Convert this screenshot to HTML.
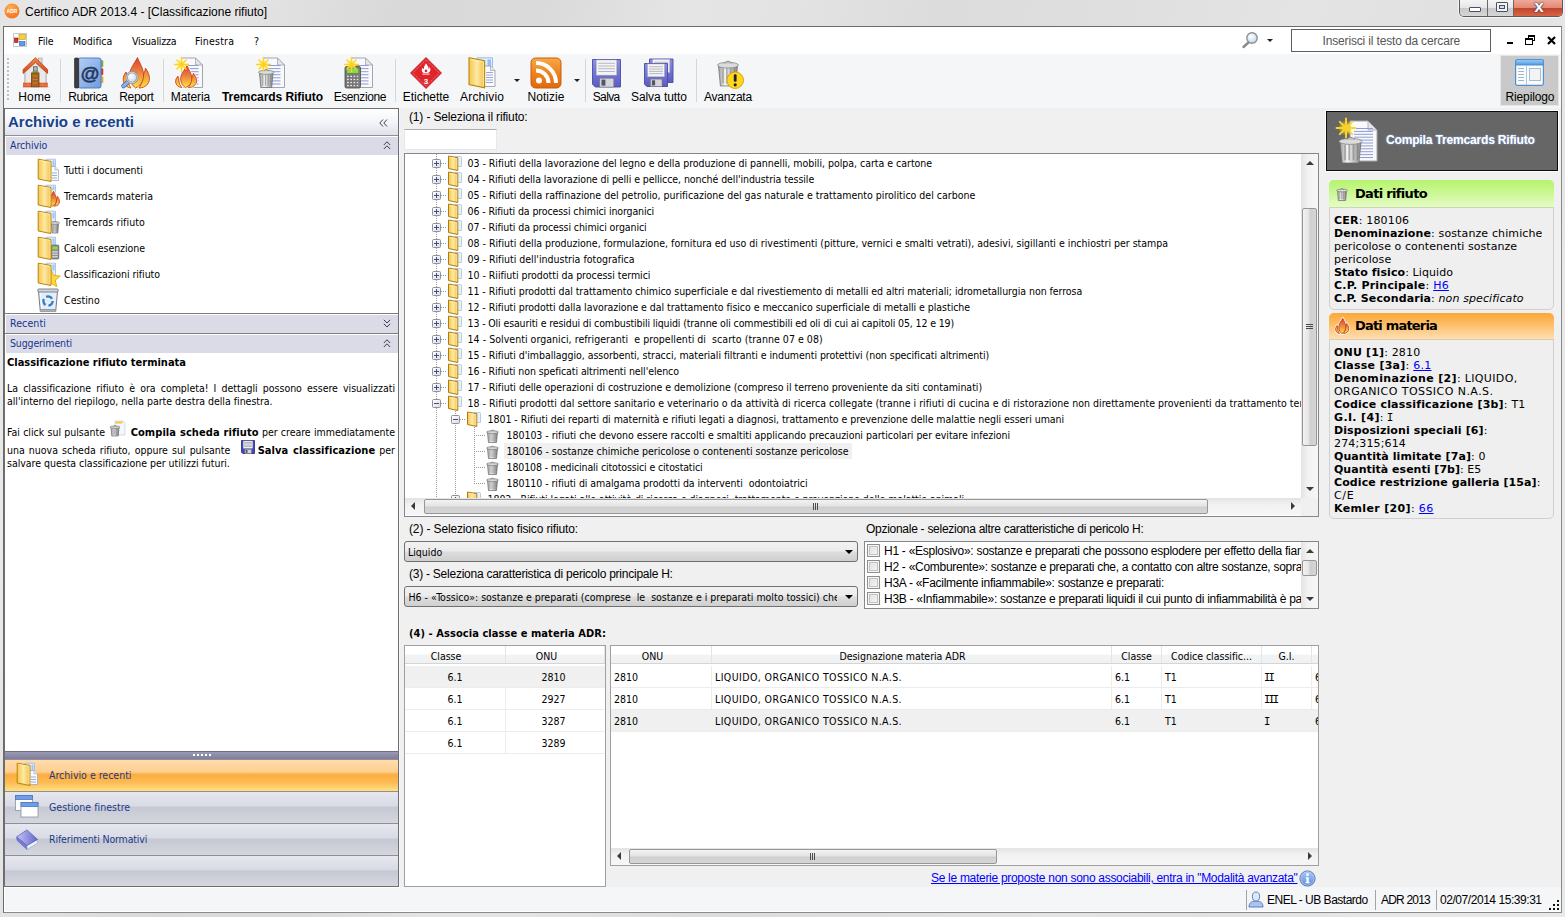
<!DOCTYPE html>
<html lang="it"><head><meta charset="utf-8"><title>Certifico ADR 2013.4 - [Classificazione rifiuto]</title>
<style>
*{box-sizing:border-box;margin:0;padding:0}
html,body{width:1565px;height:917px;overflow:hidden;background:#dcdcdc}
body{position:relative;font-family:"Liberation Sans",sans-serif;font-size:12px;color:#000;-webkit-font-smoothing:antialiased}
.a{position:absolute}
.t{position:absolute;white-space:pre;line-height:14px}
.th{font-family:"DejaVu Sans Condensed","Liberation Sans",sans-serif;font-size:10.5px;letter-spacing:-0.02px}
.vd{font-family:"DejaVu Sans","Liberation Sans",sans-serif}
svg{position:absolute;overflow:visible}
/* window frame */
#frame{left:0;top:0;width:1565px;height:917px;background:linear-gradient(105deg,#e4e4e4 0%,#e9e9e9 8%,#e2e2e2 15%,#d9d9d9 22%,#dadada 30%,#e5e5e5 38%,#e3e3e3 44%,#dcdcdc 52%,#dfdfdf 62%,#e4e4e4 72%,#e1e1e1 80%,#e7e7e7 90%,#e9e9e9 100%)}
#client{left:3px;top:26px;width:1559px;height:887px;border:1px solid #6b6b6b;border-right-color:#8a8a8a;border-bottom-color:#8a8a8a;background:#f5f6f7}
#menubar{left:4px;top:27px;width:1557px;height:27px;background:#fff}
#toolbar{left:4px;top:54px;width:1557px;height:54px;background:#f5f6f7}
.tl{position:absolute;top:90px;line-height:15px;font-size:12px;white-space:pre;text-align:center}
.sep{position:absolute;top:59px;width:1px;height:43px;background:#d5d6d8}
/* sidebar */
#side{left:4px;top:108px;width:395px;height:779px;border:1px solid #6f6f6f;background:#fff}
.band{position:absolute;left:6px;width:392px;height:18px;background:#dbdbe8}
.band span{position:absolute;left:4px;top:1px;line-height:14px;color:#15358c}
.si{position:absolute;left:64px;line-height:14px;white-space:pre}
.nb{position:absolute;left:5px;width:393px;height:32px;border-top:1px solid #8f8f98;background:linear-gradient(#e6e7ef 0%,#d9dbe4 45%,#c6c9d3 50%,#cdd0d9 75%,#d5d7df 100%)}
.nb span{position:absolute;left:44px;top:8px;line-height:14px;color:#1c3a8c;white-space:pre}
/* main */
.box{position:absolute;background:#fff;border:1px solid #abadb3}
.tr{position:absolute;left:0;height:16px;line-height:16px;white-space:pre}
.combo{position:absolute;height:21px;border:1px solid #707070;border-radius:3px;background:linear-gradient(#f2f2f2 0%,#ebebeb 48%,#dddddd 52%,#cfcfcf 100%)}
.combo span{position:absolute;left:3px;top:3px;line-height:14px;white-space:pre}
.gh{position:absolute;top:0;height:17px;line-height:20px;text-align:center;white-space:pre;border-right:1px solid #e3e4e6;background:linear-gradient(#fff 0%,#fff 45%,#f2f3f4 55%,#f0f1f2 100%)}
.gc{position:absolute;height:22px;line-height:22px;white-space:pre}
</style></head><body>
<div id="frame" class="a"></div>

<svg width="0" height="0" style="position:absolute"><defs>
<linearGradient id="gFl" gradientUnits="userSpaceOnUse" x1="0" y1="2" x2="0" y2="31"><stop offset="0" stop-color="#dc4630"/><stop offset=".45" stop-color="#ea8440"/><stop offset=".8" stop-color="#f6c040"/><stop offset="1" stop-color="#fde34a"/></linearGradient>
<linearGradient id="gFo" x1="0" y1="0" x2="1" y2="0"><stop offset="0" stop-color="#f6c64a"/><stop offset=".5" stop-color="#fde9a6"/><stop offset="1" stop-color="#f3bf3f"/></linearGradient>
<linearGradient id="gCan" x1="0" y1="0" x2="1" y2="0"><stop offset="0" stop-color="#9c9c9c"/><stop offset=".35" stop-color="#f4f4f4"/><stop offset=".7" stop-color="#bcbcbc"/><stop offset="1" stop-color="#8c8c8c"/></linearGradient>
<linearGradient id="gRoof" x1="0" y1="0" x2="0" y2="1"><stop offset="0" stop-color="#f08a48"/><stop offset="1" stop-color="#d8421a"/></linearGradient>
<linearGradient id="gBook" x1="0" y1="0" x2="1" y2="1"><stop offset="0" stop-color="#b5cff5"/><stop offset="1" stop-color="#6f9be0"/></linearGradient>
<linearGradient id="gRss" x1="0" y1="0" x2="0" y2="1"><stop offset="0" stop-color="#f8a848"/><stop offset=".5" stop-color="#ee821e"/><stop offset="1" stop-color="#de6a10"/></linearGradient>
<linearGradient id="gFlop" x1="0" y1="0" x2="0" y2="1"><stop offset="0" stop-color="#8d8fe0"/><stop offset="1" stop-color="#5a5cc0"/></linearGradient>
<linearGradient id="gWin" x1="0" y1="0" x2="0" y2="1"><stop offset="0" stop-color="#9fd0ff"/><stop offset="1" stop-color="#4f97e0"/></linearGradient>
<radialGradient id="gLens" cx=".4" cy=".35" r=".7"><stop offset="0" stop-color="#ffffff"/><stop offset="1" stop-color="#b9d9f0"/></radialGradient>
<radialGradient id="gGlow"><stop offset="0" stop-color="#fff27a" stop-opacity=".95"/><stop offset=".6" stop-color="#ffe95a" stop-opacity=".5"/><stop offset="1" stop-color="#ffe95a" stop-opacity="0"/></radialGradient>
<linearGradient id="gInfo" x1="0" y1="0" x2="0" y2="1"><stop offset="0" stop-color="#a9c6f2"/><stop offset="1" stop-color="#5f8fdc"/></linearGradient>
</defs></svg>
<svg style="left:4px;top:3px" width="16" height="16" viewBox="0 0 16 16"><defs><radialGradient id="gAdr" cx=".4" cy=".3" r=".8"><stop offset="0" stop-color="#ffb057"/><stop offset="1" stop-color="#f26a12"/></radialGradient></defs><circle cx="8" cy="8" r="7.500" fill="url(#gAdr)"/><text x="8" y="10" font-family="Liberation Sans,sans-serif" font-size="5" font-weight="bold" fill="#fff" text-anchor="middle">ADR</text></svg>
<div class="t" style="left:25px;top:5px">Certifico ADR 2013.4 - [Classificazione rifiuto]</div>
<div class="a" style="left:1459px;top:0;width:104px;height:17px;border:1px solid #5c5c5c;border-top:none;border-radius:0 0 5px 5px;overflow:hidden;box-shadow:0 0 0 1px rgba(255,255,255,.6)"><div class="a" style="left:0;top:0;width:28px;height:17px;background:linear-gradient(#f4f4f4 0%,#e6e6e6 45%,#c9c9c9 50%,#d8d8d8 100%);border-right:1px solid #6a6a6a"></div><div class="a" style="left:28px;top:0;width:26px;height:17px;background:linear-gradient(#f4f4f4 0%,#e6e6e6 45%,#c9c9c9 50%,#d8d8d8 100%);border-right:1px solid #6a6a6a"></div><div class="a" style="left:54px;top:0;width:50px;height:17px;background:linear-gradient(#f0a898 0%,#e08a78 45%,#c4452c 50%,#d86a48 100%)"></div><div class="a" style="left:9px;top:7px;width:12px;height:5px;border:1px solid #4a4f68;border-radius:1px;background:#fff"></div><div class="a" style="left:36px;top:2px;width:12px;height:10px;border:1px solid #4a4f68;border-radius:1px;background:#f4f4f4"></div><div class="a" style="left:39px;top:5px;width:6px;height:4px;border:1px solid #4a4f68;background:#ddd"></div><div class="a" style="left:71px;top:-2px;width:16px;height:18px;font:bold 17px/18px 'Liberation Sans',sans-serif;color:#fff;text-shadow:0 0 1px #3a3f58,0 0 1px #3a3f58,0 0 2px #3a3f58;text-align:center">x</div></div>
<div id="client" class="a"></div><div id="menubar" class="a"></div><div id="toolbar" class="a"></div>
<svg style="left:13px;top:33px" width="14" height="14" viewBox="0 0 14 14"><rect x=".5" y=".5" width="13" height="13" fill="#fff" stroke="#c9c9c9"/><rect x="6" y="1.500" width="6.500" height="5" fill="#f7cf3a" stroke="#c79a10" stroke-width=".6"/><rect x="1.500" y="5" width="3.500" height="4.500" fill="#d4352a" stroke="#8a1a12" stroke-width=".6"/><rect x="6.500" y="8.500" width="5.500" height="4" fill="#5f9be8" stroke="#2a5fb0" stroke-width=".6"/></svg>
<div class="t th" style="left:38px;top:34px;letter-spacing:-0.038px">File</div>
<div class="t th" style="left:73px;top:34px;letter-spacing:-0.037px">Modifica</div>
<div class="t th" style="left:132px;top:34px;letter-spacing:-0.232px">Visualizza</div>
<div class="t th" style="left:195px;top:34px;letter-spacing:0.224px">Finestra</div>
<div class="t th" style="left:254px;top:34px;letter-spacing:0px">?</div>
<svg style="left:1241px;top:31px" width="20" height="18" viewBox="0 0 20 18"><path d="M8 11L2.500 16" stroke="#8a8a8a" stroke-width="2.400" stroke-linecap="round"/><circle cx="11" cy="7" r="5.200" fill="url(#gLens)" stroke="#8f8f8f" stroke-width="1.400"/></svg>
<div class="a" style="left:1267px;top:39px;border:3px solid transparent;border-top:3px solid #222;width:0;height:0"></div>
<div class="a" style="left:1291px;top:29px;width:200px;height:23px;border:1px solid #5f5f5f;background:#fff"></div>
<div class="t" style="left:1322.500px;top:34px;color:#555;letter-spacing:-0.157px">Inserisci il testo da cercare</div>
<div class="a" style="left:1507px;top:42px;width:6px;height:2px;background:#000"></div>
<div class="a" style="left:1528px;top:35px;width:7px;height:6px;border:1px solid #000;border-top-width:2px"></div><div class="a" style="left:1525px;top:38px;width:8px;height:7px;border:1px solid #000;border-top-width:2px;background:#fff"></div>
<svg style="left:1547px;top:36px" width="9" height="9" viewBox="0 0 9 9"><path d="M1 1L8 8M8 1L1 8" stroke="#000" stroke-width="2.200"/></svg>
<div class="a" style="left:7px;top:58px;width:2px;height:44px;background:repeating-linear-gradient(#bfc1c6 0 2px,transparent 2px 4px)"></div>
<div class="a" style="left:1500px;top:55px;width:59px;height:51px;background:#c9c9c9;border:1px solid #e6e6e6"></div>
<svg style="left:18px;top:57px" width="32" height="32" viewBox="0 0 32 32"><g transform="translate(.8 0)"><rect x="19.700" y="1" width="3.600" height="8" fill="#dcdcdc" stroke="#9a9a9a" stroke-width=".6"/><path d="M5.900 15L16.600 5.500L27.500 15V27H5.900Z" fill="#d6d6d6" stroke="#a8a8a8" stroke-width=".7"/><path d="M7.200 15.500L16.600 7.200L26.200 15.500V26H7.200Z" fill="#e9e9e9"/><path d="M16.600 .7L4.300 12.500V16.500L16.600 5.200L28.800 16.500V12.500Z" fill="url(#gRoof)" stroke="#c23c14" stroke-width=".8" stroke-linejoin="round"/><rect x="14.600" y="9.800" width="3.800" height="4.300" fill="#8fc0f4" stroke="#8a4a1c" stroke-width=".8"/><rect x="13.600" y="14.200" width="6" height="1.700" fill="#58b030"/><rect x="4.500" y="26" width="24.200" height="4" fill="#e8622a" stroke="#c84a18" stroke-width=".5"/><path d="M4.500 28H28.700M9 26V28M14 28V30M24 26V28M19 28V30" stroke="#f6a070" stroke-width=".5"/><rect x="12.600" y="16" width="7.600" height="14" fill="#a8621f" stroke="#7a4210" stroke-width=".8"/><path d="M14 19H18.800M14 22.500H18.800M14 26H18.800" stroke="#c8843c" stroke-width=".9"/><path d="M3.500 30.500H30" stroke="#c8c8c8" stroke-width=".6"/></g></svg>
<div class="tl" style="left:-25.5px;width:120px;letter-spacing:0.146px;text-indent:0.146px">Home</div>
<svg style="left:72px;top:57px" width="32" height="32" viewBox="0 0 32 32"><rect x="28" y="3.500" width="3" height="6.500" rx="1" fill="#7dbb3c" stroke="#5a9a20" stroke-width=".5"/><rect x="28" y="11.500" width="3" height="6.500" rx="1" fill="#d93a3a" stroke="#a82020" stroke-width=".5"/><rect x="28" y="19.500" width="3" height="6.500" rx="1" fill="#f0b428" stroke="#c48a10" stroke-width=".5"/><rect x="6" y="1" width="23" height="30" rx="2" fill="url(#gBook)" stroke="#4a74bc" stroke-width=".9"/><rect x="2.500" y="1" width="4.200" height="30" rx="1" fill="#3c3c3c" stroke="#222" stroke-width=".6"/><text x="18" y="23" font-family="Liberation Sans,sans-serif" font-size="19" font-weight="bold" fill="#26385c" stroke="#26385c" stroke-width=".5" text-anchor="middle">@</text></svg>
<div class="tl" style="left:28px;width:120px;letter-spacing:-0.308px;text-indent:-0.308px">Rubrica</div>
<svg style="left:120px;top:57px" width="32" height="32" viewBox="0 0 32 32"><g transform="translate(0 0) scale(1 1)"><path d="M6 15C4 18 3 20 3.200 23C3.500 27.500 7 30.500 11 31C9 28 7.500 25 7.500 21.500C7.500 19 7 17 6 15Z" fill="none" stroke="#fff" stroke-width="2.34" stroke-linejoin="round"/><path d="M25.500 11C25 15 23 17 22.500 21C22 26 20.500 29 19 31C25 31 29.500 27 29.500 21.500C29.500 17 27 13.500 25.500 11Z" fill="none" stroke="#fff" stroke-width="2.34" stroke-linejoin="round"/><path d="M17.500 .5C14 7 9.500 12 9.500 19C9.500 25 13 29 15.500 31C20 29 23.500 25 23.500 18C23.500 11 19.500 6 17.500 .5Z" fill="none" stroke="#fff" stroke-width="2.34" stroke-linejoin="round"/><path d="M6 15C4 18 3 20 3.200 23C3.500 27.500 7 30.500 11 31C9 28 7.500 25 7.500 21.500C7.500 19 7 17 6 15Z" fill="url(#gFl)" stroke="#c8401a" stroke-width="0.90" stroke-linejoin="round"/><path d="M25.500 11C25 15 23 17 22.500 21C22 26 20.500 29 19 31C25 31 29.500 27 29.500 21.500C29.500 17 27 13.500 25.500 11Z" fill="url(#gFl)" stroke="#c8401a" stroke-width="0.90" stroke-linejoin="round"/><path d="M17.500 .5C14 7 9.500 12 9.500 19C9.500 25 13 29 15.500 31C20 29 23.500 25 23.500 18C23.500 11 19.500 6 17.500 .5Z" fill="url(#gFl)" stroke="#c8401a" stroke-width="0.90" stroke-linejoin="round"/></g><path d="M8 25L3.500 29" stroke="#4f74b8" stroke-width="4.600" stroke-linecap="round"/><path d="M8 25L3.500 29" stroke="#8fb0ec" stroke-width="3" stroke-linecap="round"/><circle cx="12" cy="20.500" r="5.300" fill="url(#gLens)" stroke="#8c8c94" stroke-width="2.200"/><circle cx="12" cy="20.500" r="5.300" fill="none" stroke="#e6e6ea" stroke-width=".8"/></svg>
<div class="tl" style="left:76.5px;width:120px;letter-spacing:-0.305px;text-indent:-0.305px">Report</div>
<svg style="left:174px;top:57px" width="32" height="32" viewBox="0 0 32 32"><path d="M7.5 1H21.5L28.5 8V30.5H7.5Z" fill="#f8f9fc" stroke="#a2a6ae" stroke-width="1"/><path d="M21.5 1V8H28.5Z" fill="#e4e6ec" stroke="#a2a6ae" stroke-width=".8"/><rect x="11.5" y="8.0" width="13" height="1" fill="#8f9ccf"/><rect x="11.5" y="11.1" width="13" height="1" fill="#8f9ccf"/><rect x="11.5" y="14.2" width="13" height="1" fill="#8f9ccf"/><rect x="11.5" y="17.2" width="13" height="1" fill="#8f9ccf"/><rect x="11.5" y="20.3" width="13" height="1" fill="#8f9ccf"/><rect x="11.5" y="23.4" width="13" height="1" fill="#8f9ccf"/><rect x="11.5" y="26.5" width="13" height="1" fill="#8f9ccf"/><g transform="translate(-1 8.3) scale(0.8 0.72)"><path d="M6 15C4 18 3 20 3.200 23C3.500 27.500 7 30.500 11 31C9 28 7.500 25 7.500 21.500C7.500 19 7 17 6 15Z" fill="none" stroke="#fff" stroke-width="2.93" stroke-linejoin="round"/><path d="M25.500 11C25 15 23 17 22.500 21C22 26 20.500 29 19 31C25 31 29.500 27 29.500 21.500C29.500 17 27 13.500 25.500 11Z" fill="none" stroke="#fff" stroke-width="2.93" stroke-linejoin="round"/><path d="M17.500 .5C14 7 9.500 12 9.500 19C9.500 25 13 29 15.500 31C20 29 23.500 25 23.500 18C23.500 11 19.500 6 17.500 .5Z" fill="none" stroke="#fff" stroke-width="2.93" stroke-linejoin="round"/><path d="M6 15C4 18 3 20 3.200 23C3.500 27.500 7 30.500 11 31C9 28 7.500 25 7.500 21.500C7.500 19 7 17 6 15Z" fill="url(#gFl)" stroke="#c8401a" stroke-width="1.12" stroke-linejoin="round"/><path d="M25.500 11C25 15 23 17 22.500 21C22 26 20.500 29 19 31C25 31 29.500 27 29.500 21.500C29.500 17 27 13.500 25.500 11Z" fill="url(#gFl)" stroke="#c8401a" stroke-width="1.12" stroke-linejoin="round"/><path d="M17.500 .5C14 7 9.500 12 9.500 19C9.500 25 13 29 15.500 31C20 29 23.500 25 23.500 18C23.500 11 19.500 6 17.500 .5Z" fill="url(#gFl)" stroke="#c8401a" stroke-width="1.12" stroke-linejoin="round"/></g><circle cx="7.5" cy="7.5" r="5.6" fill="url(#gGlow)"/><path d="M0.5 7.5L14.5 7.5" stroke="#ffd61e" stroke-width="1.40" stroke-linecap="round"/><path d="M2.9 2.9L12.1 12.1" stroke="#ffd61e" stroke-width="1.40" stroke-linecap="round"/><path d="M7.5 0.5L7.5 14.5" stroke="#ffd61e" stroke-width="1.40" stroke-linecap="round"/><path d="M12.1 2.9L2.9 12.1" stroke="#ffd61e" stroke-width="1.40" stroke-linecap="round"/><circle cx="7.5" cy="7.5" r="2.1" fill="#ffcf1a"/></svg>
<div class="tl" style="left:130.5px;width:120px;letter-spacing:-0.074px;text-indent:-0.074px">Materia</div>
<svg style="left:256px;top:57px" width="32" height="32" viewBox="0 0 32 32"><path d="M7.5 1H21.5L28.5 8V30.5H7.5Z" fill="#f8f9fc" stroke="#a2a6ae" stroke-width="1"/><path d="M21.5 1V8H28.5Z" fill="#e4e6ec" stroke="#a2a6ae" stroke-width=".8"/><rect x="11.5" y="8.0" width="13" height="1" fill="#8f9ccf"/><rect x="11.5" y="11.1" width="13" height="1" fill="#8f9ccf"/><rect x="11.5" y="14.2" width="13" height="1" fill="#8f9ccf"/><rect x="11.5" y="17.2" width="13" height="1" fill="#8f9ccf"/><rect x="11.5" y="20.3" width="13" height="1" fill="#8f9ccf"/><rect x="11.5" y="23.4" width="13" height="1" fill="#8f9ccf"/><rect x="11.5" y="26.5" width="13" height="1" fill="#8f9ccf"/><path d="M3.5 16.1H17.0L15.7 30.5H4.8Z" fill="url(#gCan)" stroke="#6a6a6a" stroke-width=".7"/><rect x="6.2" y="17.6" width="1.1" height="11.0" fill="#777" opacity=".55"/><rect x="8.9" y="17.6" width="1.1" height="11.0" fill="#777" opacity=".55"/><rect x="11.6" y="17.6" width="1.1" height="11.0" fill="#777" opacity=".55"/><rect x="14.3" y="17.6" width="1.1" height="11.0" fill="#777" opacity=".55"/><ellipse cx="10.25" cy="15.3" rx="7.75" ry="2.1" fill="#dcdcdc" stroke="#777" stroke-width=".7"/><path d="M7.5 14.2Q10.25 10.4 12.9 14.2" fill="#bdbdbd" stroke="#777" stroke-width=".7"/><circle cx="7.5" cy="7.5" r="5.6" fill="url(#gGlow)"/><path d="M0.5 7.5L14.5 7.5" stroke="#ffd61e" stroke-width="1.40" stroke-linecap="round"/><path d="M2.9 2.9L12.1 12.1" stroke="#ffd61e" stroke-width="1.40" stroke-linecap="round"/><path d="M7.5 0.5L7.5 14.5" stroke="#ffd61e" stroke-width="1.40" stroke-linecap="round"/><path d="M12.1 2.9L2.9 12.1" stroke="#ffd61e" stroke-width="1.40" stroke-linecap="round"/><circle cx="7.5" cy="7.5" r="2.1" fill="#ffcf1a"/></svg>
<div class="tl" style="left:212.5px;width:120px;font-weight:bold;letter-spacing:-0.061px;text-indent:-0.061px">Tremcards Rifiuto</div>
<svg style="left:344px;top:57px" width="32" height="32" viewBox="0 0 32 32"><path d="M7.5 1H21.5L28.5 8V30.5H7.5Z" fill="#f8f9fc" stroke="#a2a6ae" stroke-width="1"/><path d="M21.5 1V8H28.5Z" fill="#e4e6ec" stroke="#a2a6ae" stroke-width=".8"/><rect x="11.5" y="8.0" width="13" height="1" fill="#8f9ccf"/><rect x="11.5" y="11.1" width="13" height="1" fill="#8f9ccf"/><rect x="11.5" y="14.2" width="13" height="1" fill="#8f9ccf"/><rect x="11.5" y="17.2" width="13" height="1" fill="#8f9ccf"/><rect x="11.5" y="20.3" width="13" height="1" fill="#8f9ccf"/><rect x="11.5" y="23.4" width="13" height="1" fill="#8f9ccf"/><rect x="11.5" y="26.5" width="13" height="1" fill="#8f9ccf"/><rect x="1" y="9.500" width="15.500" height="21.500" rx="1.500" fill="#7c7c7c" stroke="#4a4a4a" stroke-width=".8"/><rect x="2.800" y="11.300" width="12" height="5" fill="#8fd652" stroke="#4f8a28" stroke-width=".6"/><rect x="2.80" y="18.20" width="2.300" height="2.100" fill="#e2e2e2" stroke="#505050" stroke-width=".4"/><rect x="5.95" y="18.20" width="2.300" height="2.100" fill="#e2e2e2" stroke="#505050" stroke-width=".4"/><rect x="9.10" y="18.20" width="2.300" height="2.100" fill="#e2e2e2" stroke="#505050" stroke-width=".4"/><rect x="12.25" y="18.20" width="2.300" height="2.100" fill="#e2e2e2" stroke="#505050" stroke-width=".4"/><rect x="2.80" y="21.30" width="2.300" height="2.100" fill="#e2e2e2" stroke="#505050" stroke-width=".4"/><rect x="5.95" y="21.30" width="2.300" height="2.100" fill="#e2e2e2" stroke="#505050" stroke-width=".4"/><rect x="9.10" y="21.30" width="2.300" height="2.100" fill="#e2e2e2" stroke="#505050" stroke-width=".4"/><rect x="12.25" y="21.30" width="2.300" height="2.100" fill="#e2e2e2" stroke="#505050" stroke-width=".4"/><rect x="2.80" y="24.40" width="2.300" height="2.100" fill="#e2e2e2" stroke="#505050" stroke-width=".4"/><rect x="5.95" y="24.40" width="2.300" height="2.100" fill="#e2e2e2" stroke="#505050" stroke-width=".4"/><rect x="9.10" y="24.40" width="2.300" height="2.100" fill="#e2e2e2" stroke="#505050" stroke-width=".4"/><rect x="12.25" y="24.40" width="2.300" height="2.100" fill="#e2e2e2" stroke="#505050" stroke-width=".4"/><rect x="2.80" y="27.50" width="2.300" height="2.100" fill="#e2e2e2" stroke="#505050" stroke-width=".4"/><rect x="5.95" y="27.50" width="2.300" height="2.100" fill="#e2e2e2" stroke="#505050" stroke-width=".4"/><rect x="9.10" y="27.50" width="2.300" height="2.100" fill="#e2e2e2" stroke="#505050" stroke-width=".4"/><rect x="12.25" y="27.50" width="2.300" height="2.100" fill="#e2e2e2" stroke="#505050" stroke-width=".4"/><circle cx="7.5" cy="7.5" r="5.6" fill="url(#gGlow)"/><path d="M0.5 7.5L14.5 7.5" stroke="#ffd61e" stroke-width="1.40" stroke-linecap="round"/><path d="M2.9 2.9L12.1 12.1" stroke="#ffd61e" stroke-width="1.40" stroke-linecap="round"/><path d="M7.5 0.5L7.5 14.5" stroke="#ffd61e" stroke-width="1.40" stroke-linecap="round"/><path d="M12.1 2.9L2.9 12.1" stroke="#ffd61e" stroke-width="1.40" stroke-linecap="round"/><circle cx="7.5" cy="7.5" r="2.1" fill="#ffcf1a"/></svg>
<div class="tl" style="left:300px;width:120px;letter-spacing:-0.427px;text-indent:-0.427px">Esenzione</div>
<svg style="left:410px;top:57px" width="32" height="32" viewBox="0 0 32 32"><path d="M16 .5L31.500 16L16 31.500L.5 16Z" fill="#e0242b" stroke="#b81820" stroke-width=".8"/><path d="M16 2.800L29.200 16L16 29.200L2.800 16Z" fill="none" stroke="#fff" stroke-width=".5" stroke-dasharray="1.200 1" opacity=".8"/><g transform="translate(16 11) scale(.72) translate(-16 -11.500)"><path d="M16 5C17.500 8 20 9.500 19.500 13C21 12 21 10.500 20.800 9.500C23 13 22.500 17.500 18.500 18.500H13.500C9.500 17.500 9.500 13.500 11.500 11C11.800 12.500 12.600 13 13.300 12.600C12.600 9.500 15 7.500 16 5Z" fill="#fff"/><circle cx="16" cy="15.500" r="1.800" fill="#e0242b"/><rect x="11" y="19.300" width="10" height="1.300" fill="#fff"/></g><text x="16" y="26.500" font-family="Liberation Sans,sans-serif" font-size="8" font-weight="bold" fill="#fff" text-anchor="middle">3</text></svg>
<div class="tl" style="left:366px;width:120px;letter-spacing:-0.023px;text-indent:-0.023px">Etichette</div>
<svg style="left:466px;top:57px" width="32" height="32" viewBox="0 0 32 32"><path d="M11 .8H26.500V26H11Z" fill="#dfecff" stroke="#9db7dc" stroke-width=".9"/><rect x="21.500" y="2.500" width="3.500" height="9" fill="#8fbff5"/><path d="M17 9H24.500L29 13.500V29.500H17Z" fill="#fafbfe" stroke="#9a9fab" stroke-width=".9"/><path d="M24.500 9V13.500H29" fill="#e4e7ee" stroke="#9a9fab" stroke-width=".7"/><path d="M20 15.500H27M20 18H27M20 20.500H27M20 23H27M20 25.500H27" stroke="#8f9ccf" stroke-width=".9"/><path d="M3 .8L18.600 3.800V30.800L3 27.500Z" fill="url(#gFo)" stroke="#b8860b" stroke-width="1.100"/><path d="M4.200 2.300L17.400 4.900V29.300" fill="none" stroke="#fff3c8" stroke-width=".8" opacity=".9"/></svg>
<div class="tl" style="left:422px;width:120px;letter-spacing:0.164px;text-indent:0.164px">Archivio</div>
<svg style="left:530px;top:57px" width="32" height="32" viewBox="0 0 32 32"><rect x="1" y="1" width="30" height="30" rx="4.500" fill="url(#gRss)" stroke="#c85c10" stroke-width="1"/><circle cx="9" cy="23.500" r="3" fill="#fff"/><path d="M6 13.500A12.500 12.500 0 0 1 18.500 26" fill="none" stroke="#fff" stroke-width="4"/><path d="M6 6A20 20 0 0 1 26 26" fill="none" stroke="#fff" stroke-width="4"/></svg>
<div class="tl" style="left:486px;width:120px;letter-spacing:0.045px;text-indent:0.045px">Notizie</div>
<svg style="left:590px;top:57px" width="32" height="32" viewBox="0 0 32 32"><path d="M2.5 2.5H30.5V30.0H5.3L2.5 27.2Z" fill="url(#gFlop)" stroke="#4a4aa8" stroke-width=".9"/><rect x="6.4" y="3.0" width="20.2" height="15.1" fill="#f4f4f6" stroke="#b8b8c8" stroke-width=".5"/><rect x="8.1" y="5.8" width="16.8" height=".9" fill="#b0b0b8"/><rect x="8.1" y="8.6" width="16.8" height=".9" fill="#b0b0b8"/><rect x="8.1" y="11.3" width="16.8" height=".9" fill="#b0b0b8"/><rect x="8.1" y="14.1" width="16.8" height=".9" fill="#b0b0b8"/><rect x="9.8" y="21.2" width="14.0" height="8.8" fill="#d5d5db" stroke="#777" stroke-width=".5"/><rect x="11.5" y="22.6" width="3.9" height="6.0" fill="#55555f"/></svg>
<div class="tl" style="left:546.5px;width:120px;letter-spacing:-0.606px;text-indent:-0.606px">Salva</div>
<svg style="left:643px;top:57px" width="32" height="32" viewBox="0 0 32 32"><path d="M6.5 2H30.0V25.5H8.8L6.5 23.2Z" fill="url(#gFlop)" stroke="#4a4aa8" stroke-width=".9"/><rect x="9.8" y="2.5" width="16.9" height="12.9" fill="#f4f4f6" stroke="#b8b8c8" stroke-width=".5"/><rect x="11.2" y="4.8" width="14.1" height=".9" fill="#b0b0b8"/><rect x="11.2" y="7.2" width="14.1" height=".9" fill="#b0b0b8"/><rect x="11.2" y="9.5" width="14.1" height=".9" fill="#b0b0b8"/><rect x="11.2" y="11.9" width="14.1" height=".9" fill="#b0b0b8"/><rect x="12.6" y="18.0" width="11.8" height="7.5" fill="#d5d5db" stroke="#777" stroke-width=".5"/><rect x="14.0" y="19.2" width="3.3" height="5.2" fill="#55555f"/><path d="M1.5 6.5H24.5V29.5H3.8L1.5 27.2Z" fill="url(#gFlop)" stroke="#4a4aa8" stroke-width=".9"/><rect x="4.7" y="7.0" width="16.6" height="12.7" fill="#f4f4f6" stroke="#b8b8c8" stroke-width=".5"/><rect x="6.1" y="9.3" width="13.8" height=".9" fill="#b0b0b8"/><rect x="6.1" y="11.6" width="13.8" height=".9" fill="#b0b0b8"/><rect x="6.1" y="13.9" width="13.8" height=".9" fill="#b0b0b8"/><rect x="6.1" y="16.2" width="13.8" height=".9" fill="#b0b0b8"/><rect x="7.5" y="22.1" width="11.5" height="7.4" fill="#d5d5db" stroke="#777" stroke-width=".5"/><rect x="8.9" y="23.3" width="3.2" height="5.1" fill="#55555f"/></svg>
<div class="tl" style="left:599px;width:120px;letter-spacing:-0.064px;text-indent:-0.064px">Salva tutto</div>
<svg style="left:712px;top:57px" width="32" height="32" viewBox="0 0 32 32"><path d="M6.5 9.2H25.5L23.6 29H8.4Z" fill="url(#gCan)" stroke="#6a6a6a" stroke-width=".7"/><rect x="10.3" y="11.3" width="1.5" height="15.1" fill="#777" opacity=".55"/><rect x="14.1" y="11.3" width="1.5" height="15.1" fill="#777" opacity=".55"/><rect x="17.9" y="11.3" width="1.5" height="15.1" fill="#777" opacity=".55"/><rect x="21.7" y="11.3" width="1.5" height="15.1" fill="#777" opacity=".55"/><ellipse cx="16.0" cy="8.2" rx="10.5" ry="2.9" fill="#dcdcdc" stroke="#777" stroke-width=".7"/><path d="M12.2 6.6Q16.0 1.4 19.8 6.6" fill="#bdbdbd" stroke="#777" stroke-width=".7"/><circle cx="23.200" cy="23.200" r="8.300" fill="#ffd51e" stroke="#caa000" stroke-width=".9"/><rect x="21.800" y="17.200" width="2.800" height="7.600" rx="1.200" fill="#222"/><circle cx="23.200" cy="27.800" r="1.600" fill="#222"/></svg>
<div class="tl" style="left:668px;width:120px;letter-spacing:-0.229px;text-indent:-0.229px">Avanzata</div>
<svg style="left:1515px;top:59px" width="29" height="27" viewBox="0 0 29 27"><rect x=".6" y=".6" width="27.800" height="25.800" rx="1.800" fill="#fbfbfb" stroke="#4f8fd6" stroke-width="1.200"/><path d="M.6 6V2.400A1.800 1.800 0 0 1 2.400 .6H26.600A1.800 1.800 0 0 1 28.400 2.400V6Z" fill="url(#gWin)" stroke="#4f8fd6" stroke-width="1"/><path d="M11.500 6.500V26" stroke="#9ccbf8" stroke-width="1"/><path d="M3.200 9.500H9M3.200 12.500H9M3.200 15.500H9M3.200 18.500H9M3.200 21.500H9" stroke="#9db4cc" stroke-width="1"/><rect x="14.500" y="9.500" width="11" height="12" fill="#f3f3f3" stroke="#a9bdd0" stroke-width="1"/></svg>
<div class="tl" style="left:1470px;width:120px;letter-spacing:-0.116px;text-indent:-0.116px">Riepilogo</div>
<div class="sep" style="left:60px"></div>
<div class="sep" style="left:163px"></div>
<div class="sep" style="left:395px"></div>
<div class="sep" style="left:585px"></div>
<div class="sep" style="left:696px"></div>
<div class="a" style="left:514px;top:79px;border:3px solid transparent;border-top:3px solid #222;width:0;height:0"></div>
<div class="a" style="left:574px;top:79px;border:3px solid transparent;border-top:3px solid #222;width:0;height:0"></div>
<div id="side" class="a"></div>
<div class="a" style="left:5px;top:109px;width:393px;height:27px;background:linear-gradient(#ffffff 0%,#f4f5f9 50%,#dfe2ec 100%);border-bottom:1px solid #8f8f98"></div>
<div class="a" style="left:8px;top:113px;font:bold 15px/18px 'Liberation Sans',sans-serif;color:#15428b;white-space:pre">Archivio e recenti</div>
<svg style="left:379px;top:119px" width="9" height="8" viewBox="0 0 9 8"><path d="M4 .5L.8 4L4 7.500M8 .5L4.800 4L8 7.500" fill="none" stroke="#3c3c46" stroke-width="1"/></svg>
<div class="band th" style="top:137px"><span style="letter-spacing:-0.078px">Archivio</span></div>
<svg style="left:383px;top:141px" width="8" height="9" viewBox="0 0 8 9"><path d="M.8 4L4 .8L7.200 4M.8 8L4 4.800L7.200 8" fill="none" stroke="#3c3c46" stroke-width="1"/></svg>
<div class="band th" style="top:315px"><span style="letter-spacing:0.109px">Recenti</span></div>
<svg style="left:383px;top:319px" width="8" height="9" viewBox="0 0 8 9"><path d="M.8 .8L4 4L7.200 .8M.8 4.800L4 8L7.200 4.800" fill="none" stroke="#3c3c46" stroke-width="1"/></svg>
<div class="band th" style="top:335px"><span style="letter-spacing:-0.137px">Suggerimenti</span></div>
<svg style="left:383px;top:339px" width="8" height="9" viewBox="0 0 8 9"><path d="M.8 4L4 .8L7.200 4M.8 8L4 4.800L7.200 8" fill="none" stroke="#3c3c46" stroke-width="1"/></svg>
<div class="a" style="left:5px;top:313px;width:393px;height:1px;background:#7d7d7d"></div>
<div class="a" style="left:5px;top:333px;width:393px;height:1px;background:#7d7d7d"></div>
<div class="si th" style="top:163px;letter-spacing:-0.012px">Tutti i documenti</div>
<svg style="left:37px;top:158px" width="24" height="24" viewBox="0 0 24 24"><g transform="translate(0 0) scale(1)"><path d="M9 1.200H18.500V20H9Z" fill="#e3efff" stroke="#9db7dc" stroke-width=".8"/><rect x="15.500" y="2.500" width="2" height="8" fill="#9cc6f5"/><path d="M13 8.500H18L21.500 12V22.500H13Z" fill="#fafbfe" stroke="#a3a9b6" stroke-width=".8"/><path d="M18 8.500V12H21.500" fill="#e4e7ee" stroke="#a3a9b6" stroke-width=".6"/><path d="M15 15H20M15 17.500H20M15 20H20" stroke="#8fa3d4" stroke-width=".9"/><path d="M1.200 1.200L14 3.400V23.500L1.200 21Z" fill="url(#gFo)" stroke="#b8860b" stroke-width="1"/><path d="M2.200 2.400L13 4.300V22.200" fill="none" stroke="#fff3c8" stroke-width=".7" opacity=".9"/></g></svg>
<div class="si th" style="top:189px;letter-spacing:0.041px">Tremcards materia</div>
<svg style="left:37px;top:184px" width="24" height="24" viewBox="0 0 24 24"><g><path d="M9 1.200H18.500V20H9Z" fill="#e3efff" stroke="#9db7dc" stroke-width=".8"/><rect x="15.500" y="2.500" width="2" height="6" fill="#9cc6f5"/><g transform="translate(8 7) scale(0.49 0.49)"><path d="M6 15C4 18 3 20 3.200 23C3.500 27.500 7 30.500 11 31C9 28 7.500 25 7.500 21.500C7.500 19 7 17 6 15Z" fill="none" stroke="#fff" stroke-width="4.78" stroke-linejoin="round"/><path d="M25.500 11C25 15 23 17 22.500 21C22 26 20.500 29 19 31C25 31 29.500 27 29.500 21.500C29.500 17 27 13.500 25.500 11Z" fill="none" stroke="#fff" stroke-width="4.78" stroke-linejoin="round"/><path d="M17.500 .5C14 7 9.500 12 9.500 19C9.500 25 13 29 15.500 31C20 29 23.500 25 23.500 18C23.500 11 19.500 6 17.500 .5Z" fill="none" stroke="#fff" stroke-width="4.78" stroke-linejoin="round"/><path d="M6 15C4 18 3 20 3.200 23C3.500 27.500 7 30.500 11 31C9 28 7.500 25 7.500 21.500C7.500 19 7 17 6 15Z" fill="url(#gFl)" stroke="#c8401a" stroke-width="1.84" stroke-linejoin="round"/><path d="M25.500 11C25 15 23 17 22.500 21C22 26 20.500 29 19 31C25 31 29.500 27 29.500 21.500C29.500 17 27 13.500 25.500 11Z" fill="url(#gFl)" stroke="#c8401a" stroke-width="1.84" stroke-linejoin="round"/><path d="M17.500 .5C14 7 9.500 12 9.500 19C9.500 25 13 29 15.500 31C20 29 23.500 25 23.500 18C23.500 11 19.500 6 17.500 .5Z" fill="url(#gFl)" stroke="#c8401a" stroke-width="1.84" stroke-linejoin="round"/></g><path d="M1.200 1.200L14 3.400V23.500L1.200 21Z" fill="url(#gFo)" stroke="#b8860b" stroke-width="1"/><path d="M2.200 2.400L13 4.300V22.200" fill="none" stroke="#fff3c8" stroke-width=".7" opacity=".9"/></g></svg>
<div class="si th" style="top:215px;letter-spacing:0.093px">Tremcards rifiuto</div>
<svg style="left:37px;top:210px" width="24" height="24" viewBox="0 0 24 24"><g><path d="M9 1.200H18.500V20H9Z" fill="#e3efff" stroke="#9db7dc" stroke-width=".8"/><rect x="15.500" y="2.500" width="2" height="6" fill="#9cc6f5"/><path d="M14.5 13.5H21.5L20.8 23.0H15.2Z" fill="url(#gCan)" stroke="#6a6a6a" stroke-width=".7"/><rect x="15.9" y="14.5" width="1.0" height="7.2" fill="#777" opacity=".55"/><rect x="17.3" y="14.5" width="1.0" height="7.2" fill="#777" opacity=".55"/><rect x="18.7" y="14.5" width="1.0" height="7.2" fill="#777" opacity=".55"/><rect x="20.1" y="14.5" width="1.0" height="7.2" fill="#777" opacity=".55"/><ellipse cx="18.0" cy="13.0" rx="4.5" ry="1.4" fill="#dcdcdc" stroke="#777" stroke-width=".7"/><path d="M16.6 12.2Q18.0 9.8 19.4 12.2" fill="#bdbdbd" stroke="#777" stroke-width=".7"/><path d="M1.200 1.200L14 3.400V23.500L1.200 21Z" fill="url(#gFo)" stroke="#b8860b" stroke-width="1"/><path d="M2.200 2.400L13 4.300V22.200" fill="none" stroke="#fff3c8" stroke-width=".7" opacity=".9"/></g></svg>
<div class="si th" style="top:241px;letter-spacing:-0.055px">Calcoli esenzione</div>
<svg style="left:37px;top:236px" width="24" height="24" viewBox="0 0 24 24"><g><path d="M9 1.200H18.500V20H9Z" fill="#e3efff" stroke="#9db7dc" stroke-width=".8"/><rect x="15.500" y="2.500" width="2" height="6" fill="#9cc6f5"/><rect x="14.300" y="9" width="7.500" height="14" rx="1" fill="#8a8a8a" stroke="#505050" stroke-width=".6"/><rect x="15.500" y="10.500" width="5.100" height="3" fill="#8fd652"/><rect x="15.5" y="15.0" width="1.300" height="1.600" fill="#ececec"/><rect x="17.4" y="15.0" width="1.300" height="1.600" fill="#ececec"/><rect x="19.3" y="15.0" width="1.300" height="1.600" fill="#ececec"/><rect x="15.5" y="17.5" width="1.300" height="1.600" fill="#ececec"/><rect x="17.4" y="17.5" width="1.300" height="1.600" fill="#ececec"/><rect x="19.3" y="17.5" width="1.300" height="1.600" fill="#ececec"/><rect x="15.5" y="20.0" width="1.300" height="1.600" fill="#ececec"/><rect x="17.4" y="20.0" width="1.300" height="1.600" fill="#ececec"/><rect x="19.3" y="20.0" width="1.300" height="1.600" fill="#ececec"/><path d="M1.200 1.200L14 3.400V23.500L1.200 21Z" fill="url(#gFo)" stroke="#b8860b" stroke-width="1"/><path d="M2.200 2.400L13 4.300V22.200" fill="none" stroke="#fff3c8" stroke-width=".7" opacity=".9"/></g></svg>
<div class="si th" style="top:267px;letter-spacing:-0.058px">Classificazioni rifiuto</div>
<svg style="left:37px;top:262px" width="24" height="24" viewBox="0 0 24 24"><g><path d="M9 1.200H18.500V20H9Z" fill="#e3efff" stroke="#9db7dc" stroke-width=".8"/><rect x="15.500" y="2.500" width="2" height="6" fill="#9cc6f5"/><polygon points="14,7.500 16.6,13.500 23.200,14 18.200,18.300 19.800,24.700 14,21.200 11,22 9.800,18.300 4.800,14 11.400,13.500" fill="#ffd83a" stroke="#d9a400" stroke-width=".8"/><path d="M1.200 1.200L14 3.400V23.500L1.200 21Z" fill="url(#gFo)" stroke="#b8860b" stroke-width="1"/><path d="M2.200 2.400L13 4.300V22.200" fill="none" stroke="#fff3c8" stroke-width=".7" opacity=".9"/></g></svg>
<div class="si th" style="top:293px;letter-spacing:0.038px">Cestino</div>
<svg style="left:37px;top:288px" width="22" height="24" viewBox="0 0 22 24"><path d="M1.500 3.500H20.500L18.800 22H3.200Z" fill="#e6edf5" stroke="#767c86" stroke-width="1"/><path d="M3.500 4.500L4.800 21" stroke="#fff" stroke-width="1" opacity=".8"/><rect x=".8" y="1" width="20.400" height="3" rx="1" fill="#cfd6de" stroke="#767c86" stroke-width=".9"/><rect x="3" y="21.800" width="16" height="1.800" rx=".8" fill="#b9c0c8" stroke="#767c86" stroke-width=".7"/><circle cx="11" cy="13" r="4.600" fill="none" stroke="#2f7fd0" stroke-width="2.400" stroke-dasharray="6.600 3"/></svg>
<div class="t th" style="left:7px;top:356px;font-weight:bold;font-size:11px;letter-spacing:-0.001px">Classificazione rifiuto terminata</div>
<div class="a th" style="left:7px;top:382px;width:388px;line-height:13px;text-align:justify;text-align-last:justify;white-space:normal">La classificazione rifiuto è ora completa! I dettagli possono essere visualizzati</div>
<div class="t th" style="left:7px;top:395px;line-height:13px">all'interno del riepilogo, nella parte destra della finestra.</div>
<div class="a th" style="left:7px;top:426px;width:388px;line-height:13px;text-align:justify;text-align-last:justify;white-space:normal">Fai click sul pulsante <span style="display:inline-block;width:19px"></span> <b style="font-size:11px;letter-spacing:0.07px">Compila scheda rifiuto</b> per creare immediatamente</div>
<div class="a th" style="left:7px;top:444px;width:388px;line-height:13px;text-align:justify;text-align-last:justify;white-space:normal">una nuova scheda rifiuto, oppure sul pulsante <span style="display:inline-block;width:19px"></span> <b style="font-size:11px;letter-spacing:0.074px">Salva classificazione</b> per</div>
<div class="t th" style="left:7px;top:457px;line-height:13px">salvare questa classificazione per utilizzi futuri.</div>
<svg style="left:110px;top:420px" width="16" height="16" viewBox="0 0 16 16"><path d="M5 1H13L15 3V15H5Z" fill="#f4f7fc" stroke="#b9c4d8" stroke-width=".6"/><rect x="5.500" y="1.500" width="7" height="2" fill="#f6c544"/><path d="M1 7.6H9L8.2 16H1.8Z" fill="url(#gCan)" stroke="#6a6a6a" stroke-width=".7"/><rect x="2.6" y="8.5" width="1.0" height="6.4" fill="#777" opacity=".55"/><rect x="4.2" y="8.5" width="1.0" height="6.4" fill="#777" opacity=".55"/><rect x="5.8" y="8.5" width="1.0" height="6.4" fill="#777" opacity=".55"/><rect x="7.4" y="8.5" width="1.0" height="6.4" fill="#777" opacity=".55"/><ellipse cx="5.0" cy="7.2" rx="5.0" ry="1.2" fill="#dcdcdc" stroke="#777" stroke-width=".7"/><path d="M3.4 6.5Q5.0 4.3 6.6 6.5" fill="#bdbdbd" stroke="#777" stroke-width=".7"/></svg>
<svg style="left:241px;top:440px" width="14" height="14" viewBox="0 0 14 14"><path d="M0.5 0.5H13.5V13.5H1.8L0.5 12.2Z" fill="#4848b8" stroke="#30308c" stroke-width=".9"/><rect x="2.3" y="1.0" width="9.4" height="7.2" fill="#f4f4f6" stroke="#b8b8c8" stroke-width=".5"/><rect x="3.1" y="2.1" width="7.8" height=".9" fill="#b0b0b8"/><rect x="3.1" y="3.4" width="7.8" height=".9" fill="#b0b0b8"/><rect x="3.1" y="4.7" width="7.8" height=".9" fill="#b0b0b8"/><rect x="3.1" y="6.0" width="7.8" height=".9" fill="#b0b0b8"/><rect x="3.9" y="9.3" width="6.5" height="4.2" fill="#d5d5db" stroke="#777" stroke-width=".5"/><rect x="4.7" y="10.0" width="1.8" height="2.9" fill="#55555f"/></svg>
<div class="a" style="left:5px;top:751px;width:393px;height:8px;background:linear-gradient(#9a9ab4,#7d7d9c);border-top:1px solid #6f6f80"></div>
<div class="a" style="left:193px;top:754px;width:19px;height:2px;background:repeating-linear-gradient(90deg,#fff 0 2px,transparent 2px 4px)"></div>
<div class="nb" style="top:759px;background:linear-gradient(#ffdcae 0%,#ffcf90 38%,#fcad40 47%,#fdba52 72%,#ffe184 100%)"><span class="th" style="letter-spacing:-0.001px">Archivio e recenti</span></div>
<div class="nb" style="top:791px"><span class="th" style="letter-spacing:0.023px">Gestione finestre</span></div>
<div class="nb" style="top:823px"><span class="th" style="letter-spacing:-0.14px">Riferimenti Normativi</span></div>
<div class="nb" style="top:855px;height:31px"></div>
<svg style="left:16px;top:762px" width="24" height="24" viewBox="0 0 24 24"><g transform="translate(0 0) scale(1)"><path d="M9 1.200H18.500V20H9Z" fill="#e3efff" stroke="#9db7dc" stroke-width=".8"/><rect x="15.500" y="2.500" width="2" height="8" fill="#9cc6f5"/><path d="M13 8.500H18L21.500 12V22.500H13Z" fill="#fafbfe" stroke="#a3a9b6" stroke-width=".8"/><path d="M18 8.500V12H21.500" fill="#e4e7ee" stroke="#a3a9b6" stroke-width=".6"/><path d="M15 15H20M15 17.500H20M15 20H20" stroke="#8fa3d4" stroke-width=".9"/><path d="M1.200 1.200L14 3.400V23.500L1.200 21Z" fill="url(#gFo)" stroke="#b8860b" stroke-width="1"/><path d="M2.200 2.400L13 4.300V22.200" fill="none" stroke="#fff3c8" stroke-width=".7" opacity=".9"/></g></svg>
<svg style="left:15px;top:795px" width="24" height="23" viewBox="0 0 24 23"><rect x=".5" y=".5" width="17" height="15" fill="#fff" stroke="#8a93a8" stroke-width=".8"/><rect x=".5" y=".5" width="17" height="4" fill="#6f9ee8" stroke="#4a74c8" stroke-width=".8"/><rect x="6" y="7.500" width="17" height="14.500" fill="#fff" stroke="#8a93a8" stroke-width=".8"/><rect x="6" y="7.500" width="17" height="4" fill="#6f9ee8" stroke="#4a74c8" stroke-width=".8"/></svg>
<svg style="left:16px;top:829px" width="24" height="22" viewBox="0 0 24 22"><defs><linearGradient id="gBk" x1="0" y1="0" x2="1" y2="0"><stop offset="0" stop-color="#c4c4f6"/><stop offset="1" stop-color="#6464cc"/></linearGradient></defs><path d="M.8 7.800Q.3 9.500 1.200 11.500L11 20.500V16.400Z" fill="#7a7ad8" stroke="#5c5cb8" stroke-width=".6"/><path d="M11 16.400L21.600 10.400V14.300L11 20.500Z" fill="#e4f1ff" stroke="#8fa6d0" stroke-width=".6"/><path d="M.8 7.800L10.400 1.200Q11 .9 11.600 1.400L21.600 10.400L11 16.400Z" fill="url(#gBk)" stroke="#5c5cb8" stroke-width=".7"/></svg>
<div class="a" style="left:400px;top:108px;width:1161px;height:780px;background:#f0f0f0"></div>
<div class="a" style="left:1322px;top:108px;width:239px;height:780px;background:#f0f0f0"></div>
<div class="t" style="left:409px;top:110px;letter-spacing:-0.156px;">(1) - Seleziona il rifiuto:</div>
<div class="box" style="left:404px;top:129px;width:93px;height:21px;border-color:#e3e9ef;border-top-color:#abadb3"></div>
<div class="box" style="left:404px;top:153px;width:915px;height:364px;border-color:#828790"></div>
<div class="a th" style="left:405px;top:154px;width:896px;height:344px;overflow:hidden">
<div class="a" style="left:31px;top:0;width:1px;height:344px;background:repeating-linear-gradient(#9a9a9a 0 1px,transparent 1px 2px)"></div>
<div class="a" style="left:50px;top:257px;width:1px;height:100px;background:repeating-linear-gradient(#9a9a9a 0 1px,transparent 1px 2px)"></div>
<div class="a" style="left:69px;top:273px;width:1px;height:56px;background:repeating-linear-gradient(#9a9a9a 0 1px,transparent 1px 2px)"></div>
<div class="a" style="left:36px;top:9px;width:6px;height:1px;background:repeating-linear-gradient(90deg,#9a9a9a 0 1px,transparent 1px 2px)"></div>
<div class="a" style="left:27px;top:5px;width:9px;height:9px;border:1px solid #919191;border-radius:1.500px;background:linear-gradient(135deg,#fff,#dcdcdc)"></div><div class="a" style="left:29px;top:9px;width:5px;height:1px;background:#3c4a9c"></div><div class="a" style="left:31px;top:7px;width:1px;height:5px;background:#3c4a9c"></div>
<svg style="left:42px;top:1px" width="16" height="16" viewBox="0 0 16 16"><path d="M8 1.500H13.500Q14.500 1.500 14.500 2.500V11.500H8Z" fill="#e6f1ff" stroke="#a9c0e0" stroke-width=".8"/><path d="M1.500 1L10.800 2.700V15.500L1.500 13.500Z" fill="url(#gFo)" stroke="#b07c10" stroke-width="1"/><path d="M2.500 2.200L9.800 3.600V14.200" fill="none" stroke="#fff6d8" stroke-width=".6" opacity=".9"/></svg>
<div class="tr" style="left:62.5px;top:1px;letter-spacing:-0.02px">03 - Rifiuti della lavorazione del legno e della produzione di pannelli, mobili, polpa, carta e cartone</div>
<div class="a" style="left:36px;top:25px;width:6px;height:1px;background:repeating-linear-gradient(90deg,#9a9a9a 0 1px,transparent 1px 2px)"></div>
<div class="a" style="left:27px;top:21px;width:9px;height:9px;border:1px solid #919191;border-radius:1.500px;background:linear-gradient(135deg,#fff,#dcdcdc)"></div><div class="a" style="left:29px;top:25px;width:5px;height:1px;background:#3c4a9c"></div><div class="a" style="left:31px;top:23px;width:1px;height:5px;background:#3c4a9c"></div>
<svg style="left:42px;top:17px" width="16" height="16" viewBox="0 0 16 16"><path d="M8 1.500H13.500Q14.500 1.500 14.500 2.500V11.500H8Z" fill="#e6f1ff" stroke="#a9c0e0" stroke-width=".8"/><path d="M1.500 1L10.800 2.700V15.500L1.500 13.500Z" fill="url(#gFo)" stroke="#b07c10" stroke-width="1"/><path d="M2.500 2.200L9.800 3.600V14.200" fill="none" stroke="#fff6d8" stroke-width=".6" opacity=".9"/></svg>
<div class="tr" style="left:62.5px;top:17px;letter-spacing:-0.075px">04 - Rifiuti della lavorazione di pelli e pellicce, nonché dell'industria tessile</div>
<div class="a" style="left:36px;top:41px;width:6px;height:1px;background:repeating-linear-gradient(90deg,#9a9a9a 0 1px,transparent 1px 2px)"></div>
<div class="a" style="left:27px;top:37px;width:9px;height:9px;border:1px solid #919191;border-radius:1.500px;background:linear-gradient(135deg,#fff,#dcdcdc)"></div><div class="a" style="left:29px;top:41px;width:5px;height:1px;background:#3c4a9c"></div><div class="a" style="left:31px;top:39px;width:1px;height:5px;background:#3c4a9c"></div>
<svg style="left:42px;top:33px" width="16" height="16" viewBox="0 0 16 16"><path d="M8 1.500H13.500Q14.500 1.500 14.500 2.500V11.500H8Z" fill="#e6f1ff" stroke="#a9c0e0" stroke-width=".8"/><path d="M1.500 1L10.800 2.700V15.500L1.500 13.500Z" fill="url(#gFo)" stroke="#b07c10" stroke-width="1"/><path d="M2.500 2.200L9.800 3.600V14.200" fill="none" stroke="#fff6d8" stroke-width=".6" opacity=".9"/></svg>
<div class="tr" style="left:62.5px;top:33px;letter-spacing:0.001px">05 - Rifiuti della raffinazione del petrolio, purificazione del gas naturale e trattamento pirolitico del carbone</div>
<div class="a" style="left:36px;top:57px;width:6px;height:1px;background:repeating-linear-gradient(90deg,#9a9a9a 0 1px,transparent 1px 2px)"></div>
<div class="a" style="left:27px;top:53px;width:9px;height:9px;border:1px solid #919191;border-radius:1.500px;background:linear-gradient(135deg,#fff,#dcdcdc)"></div><div class="a" style="left:29px;top:57px;width:5px;height:1px;background:#3c4a9c"></div><div class="a" style="left:31px;top:55px;width:1px;height:5px;background:#3c4a9c"></div>
<svg style="left:42px;top:49px" width="16" height="16" viewBox="0 0 16 16"><path d="M8 1.500H13.500Q14.500 1.500 14.500 2.500V11.500H8Z" fill="#e6f1ff" stroke="#a9c0e0" stroke-width=".8"/><path d="M1.500 1L10.800 2.700V15.500L1.500 13.500Z" fill="url(#gFo)" stroke="#b07c10" stroke-width="1"/><path d="M2.500 2.200L9.800 3.600V14.200" fill="none" stroke="#fff6d8" stroke-width=".6" opacity=".9"/></svg>
<div class="tr" style="left:62.5px;top:49px;letter-spacing:-0.11px">06 - Rifiuti da processi chimici inorganici</div>
<div class="a" style="left:36px;top:73px;width:6px;height:1px;background:repeating-linear-gradient(90deg,#9a9a9a 0 1px,transparent 1px 2px)"></div>
<div class="a" style="left:27px;top:69px;width:9px;height:9px;border:1px solid #919191;border-radius:1.500px;background:linear-gradient(135deg,#fff,#dcdcdc)"></div><div class="a" style="left:29px;top:73px;width:5px;height:1px;background:#3c4a9c"></div><div class="a" style="left:31px;top:71px;width:1px;height:5px;background:#3c4a9c"></div>
<svg style="left:42px;top:65px" width="16" height="16" viewBox="0 0 16 16"><path d="M8 1.500H13.500Q14.500 1.500 14.500 2.500V11.500H8Z" fill="#e6f1ff" stroke="#a9c0e0" stroke-width=".8"/><path d="M1.500 1L10.800 2.700V15.500L1.500 13.500Z" fill="url(#gFo)" stroke="#b07c10" stroke-width="1"/><path d="M2.500 2.200L9.800 3.600V14.200" fill="none" stroke="#fff6d8" stroke-width=".6" opacity=".9"/></svg>
<div class="tr" style="left:62.5px;top:65px;letter-spacing:-0.088px">07 - Rifiuti da processi chimici organici</div>
<div class="a" style="left:36px;top:89px;width:6px;height:1px;background:repeating-linear-gradient(90deg,#9a9a9a 0 1px,transparent 1px 2px)"></div>
<div class="a" style="left:27px;top:85px;width:9px;height:9px;border:1px solid #919191;border-radius:1.500px;background:linear-gradient(135deg,#fff,#dcdcdc)"></div><div class="a" style="left:29px;top:89px;width:5px;height:1px;background:#3c4a9c"></div><div class="a" style="left:31px;top:87px;width:1px;height:5px;background:#3c4a9c"></div>
<svg style="left:42px;top:81px" width="16" height="16" viewBox="0 0 16 16"><path d="M8 1.500H13.500Q14.500 1.500 14.500 2.500V11.500H8Z" fill="#e6f1ff" stroke="#a9c0e0" stroke-width=".8"/><path d="M1.500 1L10.800 2.700V15.500L1.500 13.500Z" fill="url(#gFo)" stroke="#b07c10" stroke-width="1"/><path d="M2.500 2.200L9.800 3.600V14.200" fill="none" stroke="#fff6d8" stroke-width=".6" opacity=".9"/></svg>
<div class="tr" style="left:62.5px;top:81px;letter-spacing:-0.006px">08 - Rifiuti della produzione, formulazione, fornitura ed uso di rivestimenti (pitture, vernici e smalti vetrati), adesivi, sigillanti e inchiostri per stampa</div>
<div class="a" style="left:36px;top:105px;width:6px;height:1px;background:repeating-linear-gradient(90deg,#9a9a9a 0 1px,transparent 1px 2px)"></div>
<div class="a" style="left:27px;top:101px;width:9px;height:9px;border:1px solid #919191;border-radius:1.500px;background:linear-gradient(135deg,#fff,#dcdcdc)"></div><div class="a" style="left:29px;top:105px;width:5px;height:1px;background:#3c4a9c"></div><div class="a" style="left:31px;top:103px;width:1px;height:5px;background:#3c4a9c"></div>
<svg style="left:42px;top:97px" width="16" height="16" viewBox="0 0 16 16"><path d="M8 1.500H13.500Q14.500 1.500 14.500 2.500V11.500H8Z" fill="#e6f1ff" stroke="#a9c0e0" stroke-width=".8"/><path d="M1.500 1L10.800 2.700V15.500L1.500 13.500Z" fill="url(#gFo)" stroke="#b07c10" stroke-width="1"/><path d="M2.500 2.200L9.800 3.600V14.200" fill="none" stroke="#fff6d8" stroke-width=".6" opacity=".9"/></svg>
<div class="tr" style="left:62.5px;top:97px;letter-spacing:-0.006px">09 - Rifiuti dell'industria fotografica</div>
<div class="a" style="left:36px;top:121px;width:6px;height:1px;background:repeating-linear-gradient(90deg,#9a9a9a 0 1px,transparent 1px 2px)"></div>
<div class="a" style="left:27px;top:117px;width:9px;height:9px;border:1px solid #919191;border-radius:1.500px;background:linear-gradient(135deg,#fff,#dcdcdc)"></div><div class="a" style="left:29px;top:121px;width:5px;height:1px;background:#3c4a9c"></div><div class="a" style="left:31px;top:119px;width:1px;height:5px;background:#3c4a9c"></div>
<svg style="left:42px;top:113px" width="16" height="16" viewBox="0 0 16 16"><path d="M8 1.500H13.500Q14.500 1.500 14.500 2.500V11.500H8Z" fill="#e6f1ff" stroke="#a9c0e0" stroke-width=".8"/><path d="M1.500 1L10.800 2.700V15.500L1.500 13.500Z" fill="url(#gFo)" stroke="#b07c10" stroke-width="1"/><path d="M2.500 2.200L9.800 3.600V14.200" fill="none" stroke="#fff6d8" stroke-width=".6" opacity=".9"/></svg>
<div class="tr" style="left:62.5px;top:113px;letter-spacing:-0.033px">10 - Riifiuti prodotti da processi termici</div>
<div class="a" style="left:36px;top:137px;width:6px;height:1px;background:repeating-linear-gradient(90deg,#9a9a9a 0 1px,transparent 1px 2px)"></div>
<div class="a" style="left:27px;top:133px;width:9px;height:9px;border:1px solid #919191;border-radius:1.500px;background:linear-gradient(135deg,#fff,#dcdcdc)"></div><div class="a" style="left:29px;top:137px;width:5px;height:1px;background:#3c4a9c"></div><div class="a" style="left:31px;top:135px;width:1px;height:5px;background:#3c4a9c"></div>
<svg style="left:42px;top:129px" width="16" height="16" viewBox="0 0 16 16"><path d="M8 1.500H13.500Q14.500 1.500 14.500 2.500V11.500H8Z" fill="#e6f1ff" stroke="#a9c0e0" stroke-width=".8"/><path d="M1.500 1L10.800 2.700V15.500L1.500 13.500Z" fill="url(#gFo)" stroke="#b07c10" stroke-width="1"/><path d="M2.500 2.200L9.800 3.600V14.200" fill="none" stroke="#fff6d8" stroke-width=".6" opacity=".9"/></svg>
<div class="tr" style="left:62.5px;top:129px;letter-spacing:-0.052px">11 - Rifiuti prodotti dal trattamento chimico superficiale e dal rivestiemento di metalli ed altri materiali; idrometallurgia non ferrosa</div>
<div class="a" style="left:36px;top:153px;width:6px;height:1px;background:repeating-linear-gradient(90deg,#9a9a9a 0 1px,transparent 1px 2px)"></div>
<div class="a" style="left:27px;top:149px;width:9px;height:9px;border:1px solid #919191;border-radius:1.500px;background:linear-gradient(135deg,#fff,#dcdcdc)"></div><div class="a" style="left:29px;top:153px;width:5px;height:1px;background:#3c4a9c"></div><div class="a" style="left:31px;top:151px;width:1px;height:5px;background:#3c4a9c"></div>
<svg style="left:42px;top:145px" width="16" height="16" viewBox="0 0 16 16"><path d="M8 1.500H13.500Q14.500 1.500 14.500 2.500V11.500H8Z" fill="#e6f1ff" stroke="#a9c0e0" stroke-width=".8"/><path d="M1.500 1L10.800 2.700V15.500L1.500 13.500Z" fill="url(#gFo)" stroke="#b07c10" stroke-width="1"/><path d="M2.500 2.200L9.800 3.600V14.200" fill="none" stroke="#fff6d8" stroke-width=".6" opacity=".9"/></svg>
<div class="tr" style="left:62.5px;top:145px;letter-spacing:-0.048px">12 - Rifiuti prodotti dalla lavorazione e dal trattamento fisico e meccanico superficiale di metalli e plastiche</div>
<div class="a" style="left:36px;top:169px;width:6px;height:1px;background:repeating-linear-gradient(90deg,#9a9a9a 0 1px,transparent 1px 2px)"></div>
<div class="a" style="left:27px;top:165px;width:9px;height:9px;border:1px solid #919191;border-radius:1.500px;background:linear-gradient(135deg,#fff,#dcdcdc)"></div><div class="a" style="left:29px;top:169px;width:5px;height:1px;background:#3c4a9c"></div><div class="a" style="left:31px;top:167px;width:1px;height:5px;background:#3c4a9c"></div>
<svg style="left:42px;top:161px" width="16" height="16" viewBox="0 0 16 16"><path d="M8 1.500H13.500Q14.500 1.500 14.500 2.500V11.500H8Z" fill="#e6f1ff" stroke="#a9c0e0" stroke-width=".8"/><path d="M1.500 1L10.800 2.700V15.500L1.500 13.500Z" fill="url(#gFo)" stroke="#b07c10" stroke-width="1"/><path d="M2.500 2.200L9.800 3.600V14.200" fill="none" stroke="#fff6d8" stroke-width=".6" opacity=".9"/></svg>
<div class="tr" style="left:62.5px;top:161px;letter-spacing:-0.126px">13 - Oli esauriti e residui di combustibili liquidi (tranne oli commestibili ed oli di cui ai capitoli 05, 12 e 19)</div>
<div class="a" style="left:36px;top:185px;width:6px;height:1px;background:repeating-linear-gradient(90deg,#9a9a9a 0 1px,transparent 1px 2px)"></div>
<div class="a" style="left:27px;top:181px;width:9px;height:9px;border:1px solid #919191;border-radius:1.500px;background:linear-gradient(135deg,#fff,#dcdcdc)"></div><div class="a" style="left:29px;top:185px;width:5px;height:1px;background:#3c4a9c"></div><div class="a" style="left:31px;top:183px;width:1px;height:5px;background:#3c4a9c"></div>
<svg style="left:42px;top:177px" width="16" height="16" viewBox="0 0 16 16"><path d="M8 1.500H13.500Q14.500 1.500 14.500 2.500V11.500H8Z" fill="#e6f1ff" stroke="#a9c0e0" stroke-width=".8"/><path d="M1.500 1L10.800 2.700V15.500L1.500 13.500Z" fill="url(#gFo)" stroke="#b07c10" stroke-width="1"/><path d="M2.500 2.200L9.800 3.600V14.200" fill="none" stroke="#fff6d8" stroke-width=".6" opacity=".9"/></svg>
<div class="tr" style="left:62.5px;top:177px;letter-spacing:0.04px">14 - Solventi organici, refrigeranti  e propellenti di  scarto (tranne 07 e 08)</div>
<div class="a" style="left:36px;top:201px;width:6px;height:1px;background:repeating-linear-gradient(90deg,#9a9a9a 0 1px,transparent 1px 2px)"></div>
<div class="a" style="left:27px;top:197px;width:9px;height:9px;border:1px solid #919191;border-radius:1.500px;background:linear-gradient(135deg,#fff,#dcdcdc)"></div><div class="a" style="left:29px;top:201px;width:5px;height:1px;background:#3c4a9c"></div><div class="a" style="left:31px;top:199px;width:1px;height:5px;background:#3c4a9c"></div>
<svg style="left:42px;top:193px" width="16" height="16" viewBox="0 0 16 16"><path d="M8 1.500H13.500Q14.500 1.500 14.500 2.500V11.500H8Z" fill="#e6f1ff" stroke="#a9c0e0" stroke-width=".8"/><path d="M1.500 1L10.800 2.700V15.500L1.500 13.500Z" fill="url(#gFo)" stroke="#b07c10" stroke-width="1"/><path d="M2.500 2.200L9.800 3.600V14.200" fill="none" stroke="#fff6d8" stroke-width=".6" opacity=".9"/></svg>
<div class="tr" style="left:62.5px;top:193px;letter-spacing:-0.048px">15 - Rifiuti d'imballaggio, assorbenti, stracci, materiali filtranti e indumenti protettivi (non specificati altrimenti)</div>
<div class="a" style="left:36px;top:217px;width:6px;height:1px;background:repeating-linear-gradient(90deg,#9a9a9a 0 1px,transparent 1px 2px)"></div>
<div class="a" style="left:27px;top:213px;width:9px;height:9px;border:1px solid #919191;border-radius:1.500px;background:linear-gradient(135deg,#fff,#dcdcdc)"></div><div class="a" style="left:29px;top:217px;width:5px;height:1px;background:#3c4a9c"></div><div class="a" style="left:31px;top:215px;width:1px;height:5px;background:#3c4a9c"></div>
<svg style="left:42px;top:209px" width="16" height="16" viewBox="0 0 16 16"><path d="M8 1.500H13.500Q14.500 1.500 14.500 2.500V11.500H8Z" fill="#e6f1ff" stroke="#a9c0e0" stroke-width=".8"/><path d="M1.500 1L10.800 2.700V15.500L1.500 13.500Z" fill="url(#gFo)" stroke="#b07c10" stroke-width="1"/><path d="M2.500 2.200L9.800 3.600V14.200" fill="none" stroke="#fff6d8" stroke-width=".6" opacity=".9"/></svg>
<div class="tr" style="left:62.5px;top:209px;letter-spacing:-0.083px">16 - Rifiuti non speficati altrimenti nell'elenco</div>
<div class="a" style="left:36px;top:233px;width:6px;height:1px;background:repeating-linear-gradient(90deg,#9a9a9a 0 1px,transparent 1px 2px)"></div>
<div class="a" style="left:27px;top:229px;width:9px;height:9px;border:1px solid #919191;border-radius:1.500px;background:linear-gradient(135deg,#fff,#dcdcdc)"></div><div class="a" style="left:29px;top:233px;width:5px;height:1px;background:#3c4a9c"></div><div class="a" style="left:31px;top:231px;width:1px;height:5px;background:#3c4a9c"></div>
<svg style="left:42px;top:225px" width="16" height="16" viewBox="0 0 16 16"><path d="M8 1.500H13.500Q14.500 1.500 14.500 2.500V11.500H8Z" fill="#e6f1ff" stroke="#a9c0e0" stroke-width=".8"/><path d="M1.500 1L10.800 2.700V15.500L1.500 13.500Z" fill="url(#gFo)" stroke="#b07c10" stroke-width="1"/><path d="M2.500 2.200L9.800 3.600V14.200" fill="none" stroke="#fff6d8" stroke-width=".6" opacity=".9"/></svg>
<div class="tr" style="left:62.5px;top:225px;letter-spacing:-0.035px">17 - Rifiuti delle operazioni di costruzione e demolizione (compreso il terreno proveniente da siti contaminati)</div>
<div class="a" style="left:36px;top:249px;width:6px;height:1px;background:repeating-linear-gradient(90deg,#9a9a9a 0 1px,transparent 1px 2px)"></div>
<div class="a" style="left:27px;top:245px;width:9px;height:9px;border:1px solid #919191;border-radius:1.500px;background:linear-gradient(135deg,#fff,#dcdcdc)"></div><div class="a" style="left:29px;top:249px;width:5px;height:1px;background:#3c4a9c"></div>
<svg style="left:42px;top:241px" width="16" height="16" viewBox="0 0 16 16"><path d="M8 1.500H13.500Q14.500 1.500 14.500 2.500V11.500H8Z" fill="#e6f1ff" stroke="#a9c0e0" stroke-width=".8"/><path d="M1.500 1L10.800 2.700V15.500L1.500 13.500Z" fill="url(#gFo)" stroke="#b07c10" stroke-width="1"/><path d="M2.500 2.200L9.800 3.600V14.200" fill="none" stroke="#fff6d8" stroke-width=".6" opacity=".9"/></svg>
<div class="tr" style="left:62.5px;top:241px;letter-spacing:0.017px">18 - Rifiuti prodotti dal settore sanitario e veterinario o da attività di ricerca collegate (tranne i rifiuti di cucina e di ristorazione non direttamente provenienti da trattamento terapeutico)</div>
<div class="a" style="left:55px;top:265px;width:6px;height:1px;background:repeating-linear-gradient(90deg,#9a9a9a 0 1px,transparent 1px 2px)"></div>
<div class="a" style="left:46px;top:261px;width:9px;height:9px;border:1px solid #919191;border-radius:1.500px;background:linear-gradient(135deg,#fff,#dcdcdc)"></div><div class="a" style="left:48px;top:265px;width:5px;height:1px;background:#3c4a9c"></div>
<svg style="left:61px;top:257px" width="16" height="16" viewBox="0 0 16 16"><path d="M8 1.500H13.500Q14.500 1.500 14.500 2.500V11.500H8Z" fill="#e6f1ff" stroke="#a9c0e0" stroke-width=".8"/><path d="M1.500 1L10.800 2.700V15.500L1.500 13.500Z" fill="url(#gFo)" stroke="#b07c10" stroke-width="1"/><path d="M2.500 2.200L9.800 3.600V14.200" fill="none" stroke="#fff6d8" stroke-width=".6" opacity=".9"/></svg>
<div class="tr" style="left:82.5px;top:257px;letter-spacing:-0.042px">1801 - Rifiuti dei reparti di maternità e rifiuti legati a diagnosi, trattamento e prevenzione delle malattie negli esseri umani</div>
<div class="a" style="left:69px;top:281px;width:11px;height:1px;background:repeating-linear-gradient(90deg,#9a9a9a 0 1px,transparent 1px 2px)"></div>
<svg style="left:81px;top:274px" width="13" height="15" viewBox="0 0 13 15"><path d="M1.5 4.6H11.5L10.5 14.5H2.5Z" fill="url(#gCan)" stroke="#6a6a6a" stroke-width=".7"/><rect x="3.5" y="5.7" width="1.0" height="7.5" fill="#777" opacity=".55"/><rect x="5.5" y="5.7" width="1.0" height="7.5" fill="#777" opacity=".55"/><rect x="7.5" y="5.7" width="1.0" height="7.5" fill="#777" opacity=".55"/><rect x="9.5" y="5.7" width="1.0" height="7.5" fill="#777" opacity=".55"/><ellipse cx="6.5" cy="4.1" rx="6.0" ry="1.4" fill="#dcdcdc" stroke="#777" stroke-width=".7"/><path d="M4.5 3.3Q6.5 0.7 8.5 3.3" fill="#bdbdbd" stroke="#777" stroke-width=".7"/></svg>
<div class="tr" style="left:101.5px;top:273px;letter-spacing:-0.034px">180103 - rifiuti che devono essere raccolti e smaltiti applicando precauzioni particolari per evitare infezioni</div>
<div class="a" style="left:69px;top:297px;width:11px;height:1px;background:repeating-linear-gradient(90deg,#9a9a9a 0 1px,transparent 1px 2px)"></div>
<svg style="left:81px;top:290px" width="13" height="15" viewBox="0 0 13 15"><path d="M1.5 4.6H11.5L10.5 14.5H2.5Z" fill="url(#gCan)" stroke="#6a6a6a" stroke-width=".7"/><rect x="3.5" y="5.7" width="1.0" height="7.5" fill="#777" opacity=".55"/><rect x="5.5" y="5.7" width="1.0" height="7.5" fill="#777" opacity=".55"/><rect x="7.5" y="5.7" width="1.0" height="7.5" fill="#777" opacity=".55"/><rect x="9.5" y="5.7" width="1.0" height="7.5" fill="#777" opacity=".55"/><ellipse cx="6.5" cy="4.1" rx="6.0" ry="1.4" fill="#dcdcdc" stroke="#777" stroke-width=".7"/><path d="M4.5 3.3Q6.5 0.7 8.5 3.3" fill="#bdbdbd" stroke="#777" stroke-width=".7"/></svg>
<div class="a" style="left:99px;top:289px;width:348px;height:16px;background:#f0f0f0"></div>
<div class="tr" style="left:101.5px;top:289px;letter-spacing:-0.014px">180106 - sostanze chimiche pericolose o contenenti sostanze pericolose</div>
<div class="a" style="left:69px;top:313px;width:11px;height:1px;background:repeating-linear-gradient(90deg,#9a9a9a 0 1px,transparent 1px 2px)"></div>
<svg style="left:81px;top:306px" width="13" height="15" viewBox="0 0 13 15"><path d="M1.5 4.6H11.5L10.5 14.5H2.5Z" fill="url(#gCan)" stroke="#6a6a6a" stroke-width=".7"/><rect x="3.5" y="5.7" width="1.0" height="7.5" fill="#777" opacity=".55"/><rect x="5.5" y="5.7" width="1.0" height="7.5" fill="#777" opacity=".55"/><rect x="7.5" y="5.7" width="1.0" height="7.5" fill="#777" opacity=".55"/><rect x="9.5" y="5.7" width="1.0" height="7.5" fill="#777" opacity=".55"/><ellipse cx="6.5" cy="4.1" rx="6.0" ry="1.4" fill="#dcdcdc" stroke="#777" stroke-width=".7"/><path d="M4.5 3.3Q6.5 0.7 8.5 3.3" fill="#bdbdbd" stroke="#777" stroke-width=".7"/></svg>
<div class="tr" style="left:101.5px;top:305px;letter-spacing:-0.126px">180108 - medicinali citotossici e citostatici</div>
<div class="a" style="left:69px;top:329px;width:11px;height:1px;background:repeating-linear-gradient(90deg,#9a9a9a 0 1px,transparent 1px 2px)"></div>
<svg style="left:81px;top:322px" width="13" height="15" viewBox="0 0 13 15"><path d="M1.5 4.6H11.5L10.5 14.5H2.5Z" fill="url(#gCan)" stroke="#6a6a6a" stroke-width=".7"/><rect x="3.5" y="5.7" width="1.0" height="7.5" fill="#777" opacity=".55"/><rect x="5.5" y="5.7" width="1.0" height="7.5" fill="#777" opacity=".55"/><rect x="7.5" y="5.7" width="1.0" height="7.5" fill="#777" opacity=".55"/><rect x="9.5" y="5.7" width="1.0" height="7.5" fill="#777" opacity=".55"/><ellipse cx="6.5" cy="4.1" rx="6.0" ry="1.4" fill="#dcdcdc" stroke="#777" stroke-width=".7"/><path d="M4.5 3.3Q6.5 0.7 8.5 3.3" fill="#bdbdbd" stroke="#777" stroke-width=".7"/></svg>
<div class="tr" style="left:101.5px;top:321px;letter-spacing:-0.049px">180110 - rifiuti di amalgama prodotti da interventi  odontoiatrici</div>
<div class="a" style="left:55px;top:345px;width:6px;height:1px;background:repeating-linear-gradient(90deg,#9a9a9a 0 1px,transparent 1px 2px)"></div>
<div class="a" style="left:46px;top:341px;width:9px;height:9px;border:1px solid #919191;border-radius:1.500px;background:linear-gradient(135deg,#fff,#dcdcdc)"></div><div class="a" style="left:48px;top:345px;width:5px;height:1px;background:#3c4a9c"></div><div class="a" style="left:50px;top:343px;width:1px;height:5px;background:#3c4a9c"></div>
<svg style="left:61px;top:337px" width="16" height="16" viewBox="0 0 16 16"><path d="M8 1.500H13.500Q14.500 1.500 14.500 2.500V11.500H8Z" fill="#e6f1ff" stroke="#a9c0e0" stroke-width=".8"/><path d="M1.500 1L10.800 2.700V15.500L1.500 13.500Z" fill="url(#gFo)" stroke="#b07c10" stroke-width="1"/><path d="M2.500 2.200L9.800 3.600V14.200" fill="none" stroke="#fff6d8" stroke-width=".6" opacity=".9"/></svg>
<div class="tr" style="left:82.5px;top:337px;letter-spacing:-0.067px">1802 - Rifiuti legati alle attività di ricerca e diagnosi, trattamento e prevenzione delle malattie animali</div>
</div>
<div class="a" style="left:1301px;top:154px;width:17px;height:344px;background:linear-gradient(90deg,#e3e3e3,#f2f2f2 40%,#f6f6f6)"></div><div class="a" style="left:1306px;top:161px;border:4px solid transparent;border-top:none;border-bottom:4px solid #3a3a3a;width:0;height:0"></div><div class="a" style="left:1306px;top:487px;border:4px solid transparent;border-bottom:none;border-top:4px solid #3a3a3a;width:0;height:0"></div><div class="a" style="left:1302px;top:208px;width:15px;height:238px;border:1px solid #979797;border-radius:2px;background:linear-gradient(90deg,#f3f3f3 0%,#e4e4e4 45%,#cfcfcf 55%,#d6d6d6 100%)"></div><div class="a" style="left:1306px;top:324px;width:7px;height:6px;background:repeating-linear-gradient(#4a4a4a 0 1px,transparent 1px 2px)"></div>
<div class="a" style="left:405px;top:498px;width:896px;height:17px;background:linear-gradient(#e3e3e3,#f2f2f2 40%,#f6f6f6)"></div><div class="a" style="left:411px;top:502px;border:4px solid transparent;border-left:none;border-right:4px solid #3a3a3a;width:0;height:0"></div><div class="a" style="left:1291px;top:502px;border:4px solid transparent;border-right:none;border-left:4px solid #3a3a3a;width:0;height:0"></div><div class="a" style="left:424px;top:499px;width:784px;height:15px;border:1px solid #979797;border-radius:2px;background:linear-gradient(#f3f3f3 0%,#e4e4e4 45%,#cfcfcf 55%,#d6d6d6 100%)"></div><div class="a" style="left:813px;top:503px;width:6px;height:7px;background:repeating-linear-gradient(90deg,#4a4a4a 0 1px,transparent 1px 2px)"></div>
<div class="a" style="left:1301px;top:498px;width:17px;height:18px;background:#f0f0f0"></div>
<div class="t" style="left:409px;top:522px;letter-spacing:-0.137px;">(2) - Seleziona stato fisico rifiuto:</div>
<div class="combo th" style="left:404px;top:541px;width:454px"><span>Liquido</span></div>
<div class="a" style="left:845px;top:550px;border:4px solid transparent;border-bottom:none;border-top:4px solid #000;width:0;height:0"></div>
<div class="t" style="left:409px;top:567px;letter-spacing:-0.246px;">(3) - Seleziona caratteristica di pericolo principale H:</div>
<div class="combo th" style="left:404px;top:586px;width:454px"><span style="left:3.500px;width:428.500px;overflow:hidden;letter-spacing:-0.013px">H6 - «Tossico»: sostanze e preparati (comprese  le  sostanze e i preparati molto tossici) che,</span></div>
<div class="a" style="left:845px;top:595px;border:4px solid transparent;border-bottom:none;border-top:4px solid #000;width:0;height:0"></div>
<div class="t" style="left:866px;top:522px;letter-spacing:-0.276px;">Opzionale - seleziona altre caratteristiche di pericolo H:</div>
<div class="box" style="left:864px;top:541px;width:455px;height:68px;border-color:#828790"></div>
<div class="a" style="left:865px;top:542px;width:436px;height:65px;overflow:hidden">
<div class="a" style="left:2px;top:2px;width:13px;height:13px;border:1px solid #8e8f8f;background:linear-gradient(135deg,#dcdcdc,#fafafa);box-shadow:inset 0 0 0 1px #f4f4f4,inset 0 0 0 2px #c3c3c3"></div>
<div class="tr" style="left:19px;top:1px;letter-spacing:-0.274px;font-family:'Liberation Sans',sans-serif;font-size:12px">H1 - «Esplosivo»: sostanze e preparati che possono esplodere per effetto della fiamma o che sono sensibili</div>
<div class="a" style="left:2px;top:18px;width:13px;height:13px;border:1px solid #8e8f8f;background:linear-gradient(135deg,#dcdcdc,#fafafa);box-shadow:inset 0 0 0 1px #f4f4f4,inset 0 0 0 2px #c3c3c3"></div>
<div class="tr" style="left:19px;top:17px;letter-spacing:-0.274px;font-family:'Liberation Sans',sans-serif;font-size:12px">H2 - «Comburente»: sostanze e preparati che, a contatto con altre sostanze, soprattutto se infiammabili</div>
<div class="a" style="left:2px;top:34px;width:13px;height:13px;border:1px solid #8e8f8f;background:linear-gradient(135deg,#dcdcdc,#fafafa);box-shadow:inset 0 0 0 1px #f4f4f4,inset 0 0 0 2px #c3c3c3"></div>
<div class="tr" style="left:19px;top:33px;letter-spacing:-0.274px;font-family:'Liberation Sans',sans-serif;font-size:12px">H3A - «Facilmente infiammabile»: sostanze e preparati:</div>
<div class="a" style="left:2px;top:50px;width:13px;height:13px;border:1px solid #8e8f8f;background:linear-gradient(135deg,#dcdcdc,#fafafa);box-shadow:inset 0 0 0 1px #f4f4f4,inset 0 0 0 2px #c3c3c3"></div>
<div class="tr" style="left:19px;top:49px;letter-spacing:-0.274px;font-family:'Liberation Sans',sans-serif;font-size:12px">H3B - «Infiammabile»: sostanze e preparati liquidi il cui punto di infiammabilità è pari o superiore</div>
</div>
<div class="a" style="left:1301px;top:542px;width:17px;height:66px;background:linear-gradient(90deg,#e3e3e3,#f2f2f2 40%,#f6f6f6)"></div><div class="a" style="left:1306px;top:549px;border:4px solid transparent;border-top:none;border-bottom:4px solid #3a3a3a;width:0;height:0"></div><div class="a" style="left:1306px;top:597px;border:4px solid transparent;border-bottom:none;border-top:4px solid #3a3a3a;width:0;height:0"></div><div class="a" style="left:1302px;top:560px;width:15px;height:16px;border:1px solid #979797;border-radius:2px;background:linear-gradient(90deg,#f3f3f3 0%,#e4e4e4 45%,#cfcfcf 55%,#d6d6d6 100%)"></div><div class="a" style="left:1306px;top:565px;width:7px;height:6px;background:none"></div>
<div class="t" style="left:409px;top:627px;font-weight:bold;font-size:11px;font-family:'DejaVu Sans Condensed',sans-serif;letter-spacing:0.061px">(4) - Associa classe e materia ADR:</div>
<div class="box" style="left:404px;top:645px;width:202px;height:242px;border-color:#a0a0a0"></div>
<div class="a th" style="left:405px;top:646px;width:200px;height:240px;overflow:hidden">
<div class="gh" style="left:0;width:101px;padding-right:18px">Classe</div><div class="gh" style="left:101px;width:99px;padding-right:17px">ONU</div>
<div class="a" style="left:0;top:17px;width:200px;height:1px;background:#d5d5d5"></div>
<div class="a" style="left:0;top:20px;width:200px;height:22px;background:#f0f0f0;border-bottom:1px solid #ececec"></div>
<div class="gc" style="left:0;top:20px;width:100px;text-align:center">6.1</div><div class="gc" style="left:100px;top:20px;width:97px;text-align:center">2810</div>
<div class="a" style="left:0;top:42px;width:200px;height:22px;background:#fff;border-bottom:1px solid #ececec"></div>
<div class="a" style="left:100px;top:42px;width:1px;height:22px;background:#ececec"></div>
<div class="gc" style="left:0;top:42px;width:100px;text-align:center">6.1</div><div class="gc" style="left:100px;top:42px;width:97px;text-align:center">2927</div>
<div class="a" style="left:0;top:64px;width:200px;height:22px;background:#fff;border-bottom:1px solid #ececec"></div>
<div class="a" style="left:100px;top:64px;width:1px;height:22px;background:#ececec"></div>
<div class="gc" style="left:0;top:64px;width:100px;text-align:center">6.1</div><div class="gc" style="left:100px;top:64px;width:97px;text-align:center">3287</div>
<div class="a" style="left:0;top:86px;width:200px;height:22px;background:#fff;border-bottom:1px solid #ececec"></div>
<div class="a" style="left:100px;top:86px;width:1px;height:22px;background:#ececec"></div>
<div class="gc" style="left:0;top:86px;width:100px;text-align:center">6.1</div><div class="gc" style="left:100px;top:86px;width:97px;text-align:center">3289</div>
</div>
<div class="box" style="left:610px;top:645px;width:709px;height:221px;border-color:#a0a0a0"></div>
<div class="a th" style="left:611px;top:646px;width:707px;height:219px;overflow:hidden">
<div class="gh" style="left:0px;width:101px;padding-right:17px">ONU</div>
<div class="gh" style="left:101px;width:400px;padding-right:18px">Designazione materia ADR</div>
<div class="gh" style="left:501px;width:50px;padding-right:0px">Classe</div>
<div class="gh" style="left:551px;width:100px;padding-right:0px">Codice classific...</div>
<div class="gh" style="left:651px;width:50px;padding-right:0px">G.I.</div>
<div class="gh" style="left:701px;width:50px;padding-right:0px"></div>
<div class="a" style="left:0;top:17px;width:707px;height:1px;background:#d5d5d5"></div>
<div class="a" style="left:0;top:20px;width:707px;height:22px;background:#fff;border-bottom:1px solid #ececec"></div>
<div class="a" style="left:100px;top:20px;width:1px;height:22px;background:#ececec"></div>
<div class="a" style="left:500px;top:20px;width:1px;height:22px;background:#ececec"></div>
<div class="a" style="left:550px;top:20px;width:1px;height:22px;background:#ececec"></div>
<div class="a" style="left:650px;top:20px;width:1px;height:22px;background:#ececec"></div>
<div class="a" style="left:700px;top:20px;width:1px;height:22px;background:#ececec"></div>
<div class="gc" style="left:3px;top:20px;letter-spacing:0px">2810</div>
<div class="gc" style="left:104px;top:20px;letter-spacing:0.409px">LIQUIDO, ORGANICO TOSSICO N.A.S.</div>
<div class="gc" style="left:504px;top:20px;letter-spacing:0px">6.1</div>
<div class="gc" style="left:554px;top:20px;letter-spacing:0px">T1</div>
<div class="gc" style="left:654px;top:20px;letter-spacing:0px"><span style="font-family:'DejaVu Sans Mono',monospace;font-size:10.500px;letter-spacing:-1.900px;margin-left:-1px">II</span></div>
<div class="gc" style="left:704px;top:20px;letter-spacing:0px">6</div>
<div class="a" style="left:0;top:42px;width:707px;height:22px;background:#fff;border-bottom:1px solid #ececec"></div>
<div class="a" style="left:100px;top:42px;width:1px;height:22px;background:#ececec"></div>
<div class="a" style="left:500px;top:42px;width:1px;height:22px;background:#ececec"></div>
<div class="a" style="left:550px;top:42px;width:1px;height:22px;background:#ececec"></div>
<div class="a" style="left:650px;top:42px;width:1px;height:22px;background:#ececec"></div>
<div class="a" style="left:700px;top:42px;width:1px;height:22px;background:#ececec"></div>
<div class="gc" style="left:3px;top:42px;letter-spacing:0px">2810</div>
<div class="gc" style="left:104px;top:42px;letter-spacing:0.409px">LIQUIDO, ORGANICO TOSSICO N.A.S.</div>
<div class="gc" style="left:504px;top:42px;letter-spacing:0px">6.1</div>
<div class="gc" style="left:554px;top:42px;letter-spacing:0px">T1</div>
<div class="gc" style="left:654px;top:42px;letter-spacing:0px"><span style="font-family:'DejaVu Sans Mono',monospace;font-size:10.500px;letter-spacing:-1.900px;margin-left:-1px">III</span></div>
<div class="gc" style="left:704px;top:42px;letter-spacing:0px">6</div>
<div class="a" style="left:0;top:64px;width:707px;height:22px;background:#f0f0f0;border-bottom:1px solid #ececec"></div>
<div class="gc" style="left:3px;top:64px;letter-spacing:0px">2810</div>
<div class="gc" style="left:104px;top:64px;letter-spacing:0.409px">LIQUIDO, ORGANICO TOSSICO N.A.S.</div>
<div class="gc" style="left:504px;top:64px;letter-spacing:0px">6.1</div>
<div class="gc" style="left:554px;top:64px;letter-spacing:0px">T1</div>
<div class="gc" style="left:654px;top:64px;letter-spacing:0px"><span style="font-family:'DejaVu Sans Mono',monospace;font-size:10.500px;letter-spacing:-1.900px;margin-left:-1px">I</span></div>
<div class="gc" style="left:704px;top:64px;letter-spacing:0px">6</div>
</div>
<div class="a" style="left:611px;top:848px;width:707px;height:17px;background:linear-gradient(#e3e3e3,#f2f2f2 40%,#f6f6f6)"></div><div class="a" style="left:617px;top:852px;border:4px solid transparent;border-left:none;border-right:4px solid #3a3a3a;width:0;height:0"></div><div class="a" style="left:1308px;top:852px;border:4px solid transparent;border-right:none;border-left:4px solid #3a3a3a;width:0;height:0"></div><div class="a" style="left:629px;top:849px;width:368px;height:15px;border:1px solid #979797;border-radius:2px;background:linear-gradient(#f3f3f3 0%,#e4e4e4 45%,#cfcfcf 55%,#d6d6d6 100%)"></div><div class="a" style="left:810px;top:853px;width:6px;height:7px;background:repeating-linear-gradient(90deg,#4a4a4a 0 1px,transparent 1px 2px)"></div>
<div class="t" style="left:931px;top:871px;letter-spacing:-0.296px;color:#0000ff;text-decoration:underline">Se le materie proposte non sono associabili, entra in "Modalità avanzata"</div>
<svg style="left:1299px;top:870px" width="17" height="17" viewBox="0 0 17 17"><circle cx="8.500" cy="8.500" r="7.600" fill="url(#gInfo)" stroke="#5877b4" stroke-width="1"/><circle cx="8.500" cy="8.500" r="6.600" fill="none" stroke="#c4d8f6" stroke-width=".7" opacity=".8"/><circle cx="8.500" cy="4.700" r="1.400" fill="#fff"/><path d="M6.800 7.200H9.700V12H10.600V13.300H6.600V12H7.500V8.400H6.800Z" fill="#fff"/></svg>
<div class="a" style="left:4px;top:887px;width:1557px;height:25px;background:#f5f6f7;border-bottom:1px solid #fff"></div>
<div class="a" style="left:4px;top:887px;width:396px;height:1px;background:#fff"></div>
<div class="a" style="left:4px;top:887px;width:1px;height:25px;background:#fff"></div>
<div class="a" style="left:1246px;top:890px;width:1px;height:20px;background:#a3a3a3"></div>
<div class="a" style="left:1375px;top:890px;width:1px;height:20px;background:#a3a3a3"></div>
<div class="a" style="left:1436px;top:890px;width:1px;height:20px;background:#a3a3a3"></div>
<svg style="left:1248px;top:891px" width="16" height="17" viewBox="0 0 16 17"><path d="M1 16C1 11.500 4 10.500 6 10H10C12 10.500 15 11.500 15 16Z" fill="#a9c4ee" stroke="#4f74b8" stroke-width=".9"/><ellipse cx="8" cy="5.500" rx="3.600" ry="4.500" fill="#dfe9f8" stroke="#4f74b8" stroke-width=".9"/></svg>
<div class="t" style="left:1267px;top:893px;letter-spacing:-0.495px;">ENEL - UB Bastardo</div>
<div class="t" style="left:1381px;top:893px;letter-spacing:-0.809px;">ADR 2013</div>
<div class="t" style="left:1440px;top:893px;letter-spacing:-0.448px;">02/07/2014 15:39:31</div>
<div class="a" style="left:1549px;top:900px;width:11px;height:11px;background:linear-gradient(#111,#111) 0 0/2px 2px repeat;background-image:radial-gradient(circle at 1px 1px,#111 1px,transparent 1.1px);background-size:4px 4px;clip-path:polygon(100% 0,100% 100%,0 100%,0 70%,70% 0)"></div>
<div class="a" style="left:1325px;top:110px;width:234px;height:62px;background:#fff"></div>
<div class="a" style="left:1326px;top:111px;width:232px;height:60px;background:#666;border:1px solid #0a0a0a"></div>
<svg style="left:1333px;top:117px" width="48" height="48" viewBox="0 0 48 48"><path d="M17 4H35L44 13V44H17Z" fill="#f8f9fc" stroke="#a2a6ae" stroke-width="1"/><path d="M35 4V13H44Z" fill="#e4e6ec" stroke="#a2a6ae" stroke-width=".8"/><rect x="21" y="11.0" width="19" height="1" fill="#8f9ccf"/><rect x="21" y="13.9" width="19" height="1" fill="#8f9ccf"/><rect x="21" y="16.8" width="19" height="1" fill="#8f9ccf"/><rect x="21" y="19.7" width="19" height="1" fill="#8f9ccf"/><rect x="21" y="22.6" width="19" height="1" fill="#8f9ccf"/><rect x="21" y="25.5" width="19" height="1" fill="#8f9ccf"/><rect x="21" y="28.4" width="19" height="1" fill="#8f9ccf"/><rect x="21" y="31.3" width="19" height="1" fill="#8f9ccf"/><rect x="21" y="34.2" width="19" height="1" fill="#8f9ccf"/><rect x="21" y="37.1" width="19" height="1" fill="#8f9ccf"/><rect x="21" y="40.0" width="19" height="1" fill="#8f9ccf"/><path d="M7 25.5H28L25.9 46H9.1Z" fill="url(#gCan)" stroke="#6a6a6a" stroke-width=".7"/><rect x="11.2" y="27.6" width="1.7" height="15.7" fill="#777" opacity=".55"/><rect x="15.4" y="27.6" width="1.7" height="15.7" fill="#777" opacity=".55"/><rect x="19.6" y="27.6" width="1.7" height="15.7" fill="#777" opacity=".55"/><rect x="23.8" y="27.6" width="1.7" height="15.7" fill="#777" opacity=".55"/><ellipse cx="17.5" cy="24.4" rx="11.5" ry="3.0" fill="#dcdcdc" stroke="#777" stroke-width=".7"/><path d="M13.3 22.8Q17.5 17.4 21.7 22.8" fill="#bdbdbd" stroke="#777" stroke-width=".7"/><circle cx="13" cy="11" r="7.6" fill="url(#gGlow)"/><path d="M3.5 11.0L22.5 11.0" stroke="#ffd61e" stroke-width="1.90" stroke-linecap="round"/><path d="M6.8 4.8L19.2 17.2" stroke="#ffd61e" stroke-width="1.90" stroke-linecap="round"/><path d="M13.0 1.5L13.0 20.5" stroke="#ffd61e" stroke-width="1.90" stroke-linecap="round"/><path d="M19.2 4.8L6.8 17.2" stroke="#ffd61e" stroke-width="1.90" stroke-linecap="round"/><circle cx="13" cy="11" r="2.9" fill="#ffcf1a"/></svg>
<div class="t" style="left:1386px;top:133px;font-weight:bold;color:#fff;font-size:12px;letter-spacing:-0.16px;text-shadow:0 0 2px #8fb8ff">Compila Tremcards Rifiuto</div>
<div class="a" style="left:1329px;top:180px;width:225px;height:130px;border:1px solid #d0d0d0;border-radius:5px;background:#efefef"></div><div class="a" style="left:1329px;top:180px;width:225px;height:28px;border-radius:5px 5px 0 0;background:linear-gradient(#b5f46e 0%,#c6f78c 40%,#e6fbc6 100%);border-bottom:1px solid #c8d8b0"></div>
<svg style="left:1335px;top:185px" width="14" height="17" viewBox="0 0 14 17"><path d="M2.5 6.0H11.5L10.6 15.5H3.4Z" fill="url(#gCan)" stroke="#6a6a6a" stroke-width=".7"/><rect x="4.3" y="7.0" width="1.0" height="7.2" fill="#777" opacity=".55"/><rect x="6.1" y="7.0" width="1.0" height="7.2" fill="#777" opacity=".55"/><rect x="7.9" y="7.0" width="1.0" height="7.2" fill="#777" opacity=".55"/><rect x="9.7" y="7.0" width="1.0" height="7.2" fill="#777" opacity=".55"/><ellipse cx="7.0" cy="5.5" rx="5.5" ry="1.4" fill="#dcdcdc" stroke="#777" stroke-width=".7"/><path d="M5.2 4.8Q7.0 2.2 8.8 4.8" fill="#bdbdbd" stroke="#777" stroke-width=".7"/></svg>
<div class="t vd" style="left:1355px;top:186px;font-weight:bold;font-size:13px;line-height:16px;letter-spacing:-0.681px">Dati rifiuto</div>
<div class="a" style="left:1329px;top:313px;width:225px;height:206px;border:1px solid #d0d0d0;border-radius:5px;background:#efefef"></div><div class="a" style="left:1329px;top:313px;width:225px;height:27px;border-radius:5px 5px 0 0;background:linear-gradient(#fca838 0%,#fdbb62 40%,#fee0b4 100%);border-bottom:1px solid #e0c8a8"></div>
<svg style="left:1334px;top:317.5px" width="16" height="16" viewBox="0 0 16 16"><g transform="translate(0 0) scale(0.5 0.5)"><path d="M6 15C4 18 3 20 3.200 23C3.500 27.500 7 30.500 11 31C9 28 7.500 25 7.500 21.500C7.500 19 7 17 6 15Z" fill="none" stroke="#fff" stroke-width="4.68" stroke-linejoin="round"/><path d="M25.500 11C25 15 23 17 22.500 21C22 26 20.500 29 19 31C25 31 29.500 27 29.500 21.500C29.500 17 27 13.500 25.500 11Z" fill="none" stroke="#fff" stroke-width="4.68" stroke-linejoin="round"/><path d="M17.500 .5C14 7 9.500 12 9.500 19C9.500 25 13 29 15.500 31C20 29 23.500 25 23.500 18C23.500 11 19.500 6 17.500 .5Z" fill="none" stroke="#fff" stroke-width="4.68" stroke-linejoin="round"/><path d="M6 15C4 18 3 20 3.200 23C3.500 27.500 7 30.500 11 31C9 28 7.500 25 7.500 21.500C7.500 19 7 17 6 15Z" fill="url(#gFl)" stroke="#c8401a" stroke-width="1.80" stroke-linejoin="round"/><path d="M25.500 11C25 15 23 17 22.500 21C22 26 20.500 29 19 31C25 31 29.500 27 29.500 21.500C29.500 17 27 13.500 25.500 11Z" fill="url(#gFl)" stroke="#c8401a" stroke-width="1.80" stroke-linejoin="round"/><path d="M17.500 .5C14 7 9.500 12 9.500 19C9.500 25 13 29 15.500 31C20 29 23.500 25 23.500 18C23.500 11 19.500 6 17.500 .5Z" fill="url(#gFl)" stroke="#c8401a" stroke-width="1.80" stroke-linejoin="round"/></g></svg>
<div class="t vd" style="left:1355px;top:318px;font-weight:bold;font-size:13px;line-height:16px;letter-spacing:-0.812px">Dati materia</div>
<div class="t vd" style="left:1334px;top:214px;font-size:11px;line-height:13px;letter-spacing:0.185px"><b>CER</b>: 180106</div>
<div class="t vd" style="left:1334px;top:227px;font-size:11px;line-height:13px;letter-spacing:0.122px"><b>Denominazione</b>: sostanze chimiche</div>
<div class="t vd" style="left:1334px;top:240px;font-size:11px;line-height:13px;letter-spacing:0.06px">pericolose o contenenti sostanze</div>
<div class="t vd" style="left:1334px;top:253px;font-size:11px;line-height:13px;letter-spacing:0.089px">pericolose</div>
<div class="t vd" style="left:1334px;top:266px;font-size:11px;line-height:13px;letter-spacing:0.084px"><b>Stato fisico</b>: Liquido</div>
<div class="t vd" style="left:1334px;top:279px;font-size:11px;line-height:13px;letter-spacing:0.221px"><b>C.P. Principale</b>: <span style="color:#0000ff;text-decoration:underline">H6</span></div>
<div class="t vd" style="left:1334px;top:292px;font-size:11px;line-height:13px;letter-spacing:0.106px"><b>C.P. Secondaria</b>: <i>non specificato</i></div>
<div class="t vd" style="left:1334px;top:346px;font-size:11px;line-height:13px;letter-spacing:0.159px"><b>ONU [1]</b>: 2810</div>
<div class="t vd" style="left:1334px;top:359px;font-size:11px;line-height:13px;letter-spacing:0.25px"><b>Classe [3a]</b>: <span style="color:#0000ff;text-decoration:underline">6.1</span></div>
<div class="t vd" style="left:1334px;top:372px;font-size:11px;line-height:13px;letter-spacing:0.345px"><b>Denominazione [2]</b>: LIQUIDO,</div>
<div class="t vd" style="left:1334px;top:385px;font-size:11px;line-height:13px;letter-spacing:0.451px">ORGANICO TOSSICO N.A.S.</div>
<div class="t vd" style="left:1334px;top:398px;font-size:11px;line-height:13px;letter-spacing:0.193px"><b>Codice classificazione [3b]</b>: T1</div>
<div class="t vd" style="left:1334px;top:411px;font-size:11px;line-height:13px;letter-spacing:0.349px"><b>G.I. [4]</b>: <span style="font-family:'DejaVu Sans Mono',monospace;letter-spacing:-1.500px;margin-left:-1px">I</span></div>
<div class="t vd" style="left:1334px;top:424px;font-size:11px;line-height:13px;letter-spacing:0.105px"><b>Disposizioni speciali [6]</b>:</div>
<div class="t vd" style="left:1334px;top:437px;font-size:11px;line-height:13px;letter-spacing:0.145px">274;315;614</div>
<div class="t vd" style="left:1334px;top:450px;font-size:11px;line-height:13px;letter-spacing:0.087px"><b>Quantità limitate [7a]</b>: 0</div>
<div class="t vd" style="left:1334px;top:463px;font-size:11px;line-height:13px;letter-spacing:0.014px"><b>Quantità esenti [7b]</b>: E5</div>
<div class="t vd" style="left:1334px;top:476px;font-size:11px;line-height:13px;letter-spacing:0.101px"><b>Codice restrizione galleria [15a]</b>:</div>
<div class="t vd" style="left:1334px;top:489px;font-size:11px;line-height:13px;letter-spacing:0.652px">C/E</div>
<div class="t vd" style="left:1334px;top:502px;font-size:11px;line-height:13px;letter-spacing:0.346px"><b>Kemler [20]</b>: <span style="color:#0000ff;text-decoration:underline">66</span></div>
</body></html>
